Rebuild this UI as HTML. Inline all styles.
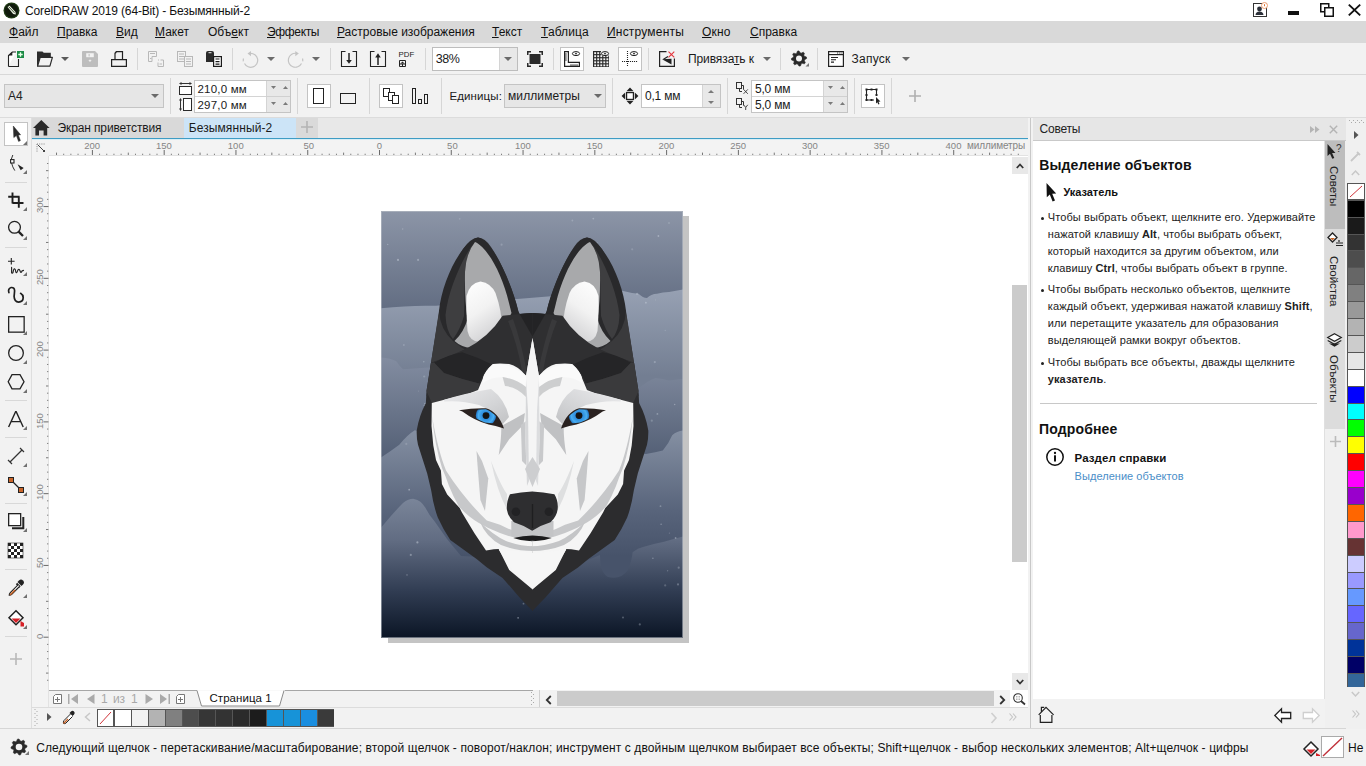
<!DOCTYPE html>
<html><head><meta charset="utf-8"><title>CorelDRAW</title><style>
*{box-sizing:border-box;margin:0;padding:0}
html,body{width:1366px;height:766px;overflow:hidden;background:#f2f2f2;font-family:"Liberation Sans",sans-serif;color:#1a1a1a}
.a{position:absolute}
.t{position:absolute;white-space:pre;line-height:1;font-family:"Liberation Sans",sans-serif}
svg{overflow:visible}
</style></head><body>
<div class="a" style="left:0px;top:0px;width:1366px;height:21px;background:#ffffff;"></div>
<svg class="a" style="left:3px;top:2px;" width="17" height="17" viewBox="0 0 17 17"><circle cx="8.5" cy="8.5" r="8" fill="#1f3a14"/><circle cx="8.5" cy="8.5" r="6.8" fill="#101a0c"/><path d="M4.5 5 L6.5 3.5 L12.5 10 L12.8 12.6 L10.2 12 Z" fill="#e8eee0"/><path d="M5.6 4.6 L11.5 10.8" stroke="#1f3a14" stroke-width="0.8"/></svg>
<div class="t" style="left:25px;top:4.84px;font-size:12px;color:#111;font-weight:normal;letter-spacing:-0.15px;">CorelDRAW 2019 (64-Bit) - Безымянный-2</div>
<svg class="a" style="left:1253px;top:3px;" width="15" height="15" viewBox="0 0 15 15"><rect x="0.5" y="0.5" width="13" height="13" fill="#fff" stroke="#333" stroke-width="1"/><circle cx="6.5" cy="6" r="2.4" fill="#2b2f38"/><path d="M2.5 12 Q2.8 8.8 6.5 8.6 Q10.2 8.8 10.5 12 Z" fill="#2b2f38"/><circle cx="11.5" cy="2.5" r="3" fill="#fff" stroke="#f0a070" stroke-width="1"/><rect x="11" y="1.2" width="1" height="2" fill="#e07030"/></svg>
<div class="a" style="left:1288px;top:11px;width:11px;height:4px;background:#111;"></div>
<svg class="a" style="left:1320px;top:3px;" width="14" height="14" viewBox="0 0 14 14"><rect x="0.75" y="0.75" width="8" height="8" fill="none" stroke="#111" stroke-width="1.5"/><rect x="4.75" y="4.75" width="8.5" height="8.5" fill="#fff" stroke="#111" stroke-width="1.5"/></svg>
<svg class="a" style="left:1348px;top:4px;" width="13" height="12" viewBox="0 0 13 12"><path d="M0.8 0.6 L12.2 11.4 M12.2 0.6 L0.8 11.4" stroke="#111" stroke-width="1.9"/></svg>
<div class="a" style="left:0px;top:21px;width:1366px;height:22px;background:#d9d9d9;"></div>
<div class="t" style="left:9px;top:25.84px;font-size:12px;color:#111;font-weight:normal;letter-spacing:0px;text-underline-offset:1px"><u>Ф</u>айл</div>
<div class="t" style="left:57px;top:25.84px;font-size:12px;color:#111;font-weight:normal;letter-spacing:0px;text-underline-offset:1px"><u>П</u>равка</div>
<div class="t" style="left:116px;top:25.84px;font-size:12px;color:#111;font-weight:normal;letter-spacing:0px;text-underline-offset:1px"><u>В</u>ид</div>
<div class="t" style="left:155px;top:25.84px;font-size:12px;color:#111;font-weight:normal;letter-spacing:0px;text-underline-offset:1px"><u>М</u>акет</div>
<div class="t" style="left:208px;top:25.84px;font-size:12px;color:#111;font-weight:normal;letter-spacing:0px;text-underline-offset:1px">Объ<u>е</u>кт</div>
<div class="t" style="left:267px;top:25.84px;font-size:12px;color:#111;font-weight:normal;letter-spacing:-0.35px;text-underline-offset:1px"><u>Э</u>ффекты</div>
<div class="t" style="left:337px;top:25.84px;font-size:12px;color:#111;font-weight:normal;letter-spacing:0px;text-underline-offset:1px"><u>Р</u>астровые изображения</div>
<div class="t" style="left:492px;top:25.84px;font-size:12px;color:#111;font-weight:normal;letter-spacing:0px;text-underline-offset:1px"><u>Т</u>екст</div>
<div class="t" style="left:541px;top:25.84px;font-size:12px;color:#111;font-weight:normal;letter-spacing:0.1px;text-underline-offset:1px"><u>Т</u>аблица</div>
<div class="t" style="left:607px;top:25.84px;font-size:12px;color:#111;font-weight:normal;letter-spacing:0.2px;text-underline-offset:1px"><u>И</u>нструменты</div>
<div class="t" style="left:702px;top:25.84px;font-size:12px;color:#111;font-weight:normal;letter-spacing:0.15px;text-underline-offset:1px"><u>О</u>кно</div>
<div class="t" style="left:750px;top:25.84px;font-size:12px;color:#111;font-weight:normal;letter-spacing:0px;text-underline-offset:1px"><u>С</u>правка</div>
<div class="a" style="left:0px;top:43px;width:1366px;height:31px;background:#f2f2f2;"></div>
<div class="a" style="left:0px;top:74px;width:1366px;height:1px;background:#d8d8d8;"></div>
<svg class="a" style="left:8px;top:51px;" width="17" height="16" viewBox="0 0 17 16"><path d="M0.5 15.5 V4.5 L4.3 1 H8" fill="#fff" stroke="#222" stroke-width="1.1"/><path d="M0.5 15.5 H10.5 V8" fill="none" stroke="#222" stroke-width="1.1"/><path d="M0.5 4.5 L4.3 1 V4.5 Z" fill="#222"/><rect x="9" y="0" width="7" height="7" fill="#1b8a45"/><path d="M12.5 1.3 V5.7 M10.3 3.5 H14.7" stroke="#e8ffe8" stroke-width="1.3"/></svg>
<svg class="a" style="left:37px;top:51px;" width="16" height="16" viewBox="0 0 16 16"><path d="M0.6 15.2 V1 H5.2 L6.6 2.4 H13.2 V6.5" fill="#2c2c2c" stroke="#2c2c2c" stroke-width="1.2"/><path d="M0.6 15.2 L3.2 6.3 H15.4 L12.9 15.2 Z" fill="#f2f2f2" stroke="#2c2c2c" stroke-width="1.2" stroke-linejoin="round"/></svg>
<svg class="a" style="left:61px;top:57px;" width="8" height="4" viewBox="0 0 8 4"><path d="M0 0 L8 0 L4 4 Z" fill="#5a5a5a"/></svg>
<svg class="a" style="left:82px;top:51px;" width="16" height="16" viewBox="0 0 16 16"><path d="M0 1 Q0 0 1 0 H13 L16 3 V15 Q16 16 15 16 H1 Q0 16 0 15 Z" fill="#bdbdbd"/><rect x="4.2" y="2.2" width="7.6" height="4" fill="#f2f2f2"/><rect x="6.6" y="3" width="1" height="2.4" fill="#bdbdbd"/><path d="M7 9.3 H9 L8 10.5 Z" fill="#f2f2f2" stroke="#f2f2f2" stroke-width="1"/></svg>
<svg class="a" style="left:111px;top:51px;" width="16" height="16" viewBox="0 0 16 16"><path d="M4 8.5 V2.3 L5.3 0.6 H11.5 V8.5" fill="#f2f2f2" stroke="#222" stroke-width="1.2"/><path d="M4 2.3 H5.3 V0.6" fill="#222"/><path d="M0.6 8.6 H15.4 V15.3 H0.6 Z" fill="#f2f2f2" stroke="#222" stroke-width="1.2"/></svg>
<div class="a" style="left:137px;top:48px;width:1px;height:22px;background:#d6d6d6;"></div>
<svg class="a" style="left:148px;top:51px;" width="17" height="16" viewBox="0 0 17 16"><g fill="none" stroke="#b8b8b8" stroke-width="1"><path d="M0.5 0.5 H8.5 V5.5 H4 V10.5 H0.5 Z"/><path d="M2 2.5 H7"/><path d="M2 7.5 H3.5"/><path d="M10 9 H11 M12.5 9 H15.5 V15.5 H10 V11.5" stroke-dasharray="none"/><path d="M11.5 13 H14"/></g></svg>
<svg class="a" style="left:177px;top:51px;" width="16" height="16" viewBox="0 0 16 16"><g fill="#f2f2f2" stroke="#b8b8b8" stroke-width="1"><rect x="0.5" y="0.5" width="8" height="10"/><path d="M2 3 H7 M2 5.5 H7 M2 8 H7"/><rect x="7.5" y="5.5" width="8" height="10"/><path d="M9 8 H14 M9 10.5 H14 M9 13 H14"/></g></svg>
<svg class="a" style="left:206px;top:51px;" width="16" height="16" viewBox="0 0 16 16"><path d="M0 2 Q0 0 2 0 H6 Q8 0 8 2 V11 H0 Z" fill="#2a2a2a"/><rect x="2.5" y="1.2" width="3" height="1" fill="#f2f2f2"/><rect x="7.6" y="5.6" width="7.8" height="9.8" fill="#fff" stroke="#1a1a1a" stroke-width="1.2"/><path d="M9.5 8 H13.5 M9.5 10.6 H13.5 M9.5 13.2 H13.5" stroke="#1a1a1a" stroke-width="1.2"/></svg>
<div class="a" style="left:232px;top:48px;width:1px;height:22px;background:#d6d6d6;"></div>
<svg class="a" style="left:242px;top:51px;" width="17" height="17" viewBox="0 0 17 17"><path d="M8.2 2.3 A7 7 0 1 1 2.5 12.5" fill="none" stroke="#c4c4c4" stroke-width="1.2"/><path d="M1.3 10.3 A7 7 0 0 1 1.5 7.5" fill="none" stroke="#c4c4c4" stroke-width="1.2"/><path d="M5.5 2.6 L9 0 V5.2 Z" fill="#c4c4c4"/></svg>
<svg class="a" style="left:267px;top:57px;" width="8" height="4" viewBox="0 0 8 4"><path d="M0 0 L8 0 L4 4 Z" fill="#6b6b6b"/></svg>
<svg class="a" style="left:288px;top:51px;" width="17" height="17" viewBox="0 0 17 17"><path d="M8.2 2.3 A7 7 0 1 0 13.5 12.5" fill="none" stroke="#c4c4c4" stroke-width="1.2"/><path d="M14.7 10.3 A7 7 0 0 0 14.5 7.5" fill="none" stroke="#c4c4c4" stroke-width="1.2"/><path d="M10.8 2.6 L7.3 0 V5.2 Z" fill="#c4c4c4"/></svg>
<svg class="a" style="left:312px;top:57px;" width="8" height="4" viewBox="0 0 8 4"><path d="M0 0 L8 0 L4 4 Z" fill="#6b6b6b"/></svg>
<div class="a" style="left:330px;top:48px;width:1px;height:22px;background:#d6d6d6;"></div>
<svg class="a" style="left:341px;top:51px;" width="16" height="16" viewBox="0 0 16 16"><path d="M4.5 0.5 H0.5 V15.5 H15.5 V0.5 H11.5" fill="none" stroke="#222" stroke-width="1.1"/><path d="M8 2 V10" stroke="#222" stroke-width="1.5"/><path d="M5.2 9 L8 12.8 L10.8 9 Z" fill="#222"/></svg>
<svg class="a" style="left:370px;top:51px;" width="16" height="16" viewBox="0 0 16 16"><path d="M4.5 0.5 H0.5 V15.5 H15.5 V0.5 H11.5" fill="none" stroke="#222" stroke-width="1.1"/><path d="M8 6 V14" stroke="#222" stroke-width="1.5"/><path d="M5.2 6.5 L8 2.2 L10.8 6.5 Z" fill="#222"/></svg>
<div class="t" style="left:398.6px;top:51.40px;font-size:7.8px;color:#222;font-weight:normal;letter-spacing:0px;">PDF</div>
<svg class="a" style="left:399px;top:60px;" width="7" height="7" viewBox="0 0 7 7"><path d="M0.5 6.5 V0.5 H6.5 V6.5 Z M0.5 4 H6.5" fill="none" stroke="#222" stroke-width="1"/><path d="M3.5 1.5 L1.5 3.5 H5.5 Z" fill="#222"/><path d="M3.5 4 V6.5" stroke="#222" stroke-width="1"/></svg>
<div class="a" style="left:425px;top:48px;width:1px;height:22px;background:#d6d6d6;"></div>
<div class="a" style="left:432px;top:47px;width:86px;height:24px;background:#fff;border:1px solid #bdbdbd"></div>
<div class="a" style="left:499px;top:48px;width:18px;height:22px;background:#e8e8e8;border-left:1px solid #d4d4d4"></div>
<svg class="a" style="left:504px;top:57px;" width="8" height="4" viewBox="0 0 8 4"><path d="M0 0 L8 0 L4 4 Z" fill="#6a6a6a"/></svg>
<div class="t" style="left:435.8px;top:53.42px;font-size:12.5px;color:#1a1a1a;font-weight:normal;letter-spacing:-0.5px;">38%</div>
<svg class="a" style="left:527px;top:51px;" width="16" height="16" viewBox="0 0 16 16"><path d="M0.75 4 V0.75 H4 M12 0.75 H15.25 V4 M15.25 12 V15.25 H12 M4 15.25 H0.75 V12" fill="none" stroke="#2a2a2a" stroke-width="1.5"/><rect x="2.5" y="3" width="11" height="10" fill="#2a2a2a"/></svg>
<div class="a" style="left:553px;top:48px;width:1px;height:22px;background:#d6d6d6;"></div>
<div class="a" style="left:560px;top:47px;width:24px;height:24px;background:#fff;border:1px solid #c3c3c3"></div>
<svg class="a" style="left:564px;top:51px;" width="16" height="16" viewBox="0 0 16 16"><path d="M0.6 0.6 H4.4 V11.4 H15.4 V15.4 H0.6 Z" fill="#fff" stroke="#222" stroke-width="1.2"/><path d="M1 3 H2.8 M1 5 H2.8 M1 7 H2.8 M1 9 H2.8 M7 15 V13.2 M9 15 V13.2 M11 15 V13.2 M13 15 V13.2" stroke="#222" stroke-width="0.9"/><ellipse cx="12" cy="2.6" rx="3.6" ry="2" fill="#fff" stroke="#222" stroke-width="1"/><circle cx="12" cy="2.6" r="0.9" fill="#222"/></svg>
<svg class="a" style="left:593px;top:51px;" width="16" height="16" viewBox="0 0 16 16"><path d="M0 0 H8 V4.5 H16 V16 H0 Z" fill="#2a2a2a"/><rect x="1.20" y="1.20" width="1.9" height="1.9" fill="#f2f2f2"/><rect x="1.20" y="4.25" width="1.9" height="1.9" fill="#f2f2f2"/><rect x="1.20" y="7.30" width="1.9" height="1.9" fill="#f2f2f2"/><rect x="1.20" y="10.35" width="1.9" height="1.9" fill="#f2f2f2"/><rect x="1.20" y="13.40" width="1.9" height="1.9" fill="#f2f2f2"/><rect x="4.25" y="1.20" width="1.9" height="1.9" fill="#f2f2f2"/><rect x="4.25" y="4.25" width="1.9" height="1.9" fill="#f2f2f2"/><rect x="4.25" y="7.30" width="1.9" height="1.9" fill="#f2f2f2"/><rect x="4.25" y="10.35" width="1.9" height="1.9" fill="#f2f2f2"/><rect x="4.25" y="13.40" width="1.9" height="1.9" fill="#f2f2f2"/><rect x="7.30" y="1.20" width="1.9" height="1.9" fill="#f2f2f2"/><rect x="7.30" y="4.25" width="1.9" height="1.9" fill="#f2f2f2"/><rect x="7.30" y="7.30" width="1.9" height="1.9" fill="#f2f2f2"/><rect x="7.30" y="10.35" width="1.9" height="1.9" fill="#f2f2f2"/><rect x="7.30" y="13.40" width="1.9" height="1.9" fill="#f2f2f2"/><rect x="10.35" y="4.25" width="1.9" height="1.9" fill="#f2f2f2"/><rect x="10.35" y="7.30" width="1.9" height="1.9" fill="#f2f2f2"/><rect x="10.35" y="10.35" width="1.9" height="1.9" fill="#f2f2f2"/><rect x="10.35" y="13.40" width="1.9" height="1.9" fill="#f2f2f2"/><rect x="13.40" y="4.25" width="1.9" height="1.9" fill="#f2f2f2"/><rect x="13.40" y="7.30" width="1.9" height="1.9" fill="#f2f2f2"/><rect x="13.40" y="10.35" width="1.9" height="1.9" fill="#f2f2f2"/><rect x="13.40" y="13.40" width="1.9" height="1.9" fill="#f2f2f2"/><ellipse cx="12" cy="2.6" rx="3.6" ry="2" fill="#f2f2f2" stroke="#222" stroke-width="1"/><circle cx="12" cy="2.6" r="0.9" fill="#222"/></svg>
<div class="a" style="left:618px;top:47px;width:24px;height:24px;background:#fff;border:1px solid #c3c3c3"></div>
<svg class="a" style="left:622px;top:51px;" width="16" height="16" viewBox="0 0 16 16"><path d="M5.5 0 V16" stroke="#222" stroke-width="1.1" stroke-dasharray="1.1 0.9"/><path d="M0 10.5 H16" stroke="#222" stroke-width="1.1" stroke-dasharray="1.1 0.9"/><ellipse cx="12" cy="2.6" rx="3.6" ry="2" fill="#fff" stroke="#222" stroke-width="1"/><circle cx="12" cy="2.6" r="0.9" fill="#222"/></svg>
<div class="a" style="left:648px;top:48px;width:1px;height:22px;background:#d6d6d6;"></div>
<svg class="a" style="left:659px;top:51px;" width="16" height="16" viewBox="0 0 16 16"><path d="M7.5 0.6 H0.6 V15.4 H15.4 V7.5" fill="none" stroke="#222" stroke-width="1.2"/><path d="M12.5 7.8 L12.5 13.5 L3 8.2 Z" fill="#222"/><path d="M4.5 8.2 L9 5.5" stroke="#222" stroke-width="1.2"/><path d="M9.5 0.6 L15.3 6.3 M15.3 0.6 L9.5 6.3" stroke="#e3343c" stroke-width="1.1"/></svg>
<div class="t" style="left:688px;top:52.84px;font-size:12px;color:#1a1a1a;font-weight:normal;letter-spacing:-0.1px;text-underline-offset:1px">Привяза<u>т</u>ь к</div>
<svg class="a" style="left:763px;top:57px;" width="8" height="4" viewBox="0 0 8 4"><path d="M0 0 L8 0 L4 4 Z" fill="#6a6a6a"/></svg>
<div class="a" style="left:780px;top:48px;width:1px;height:22px;background:#d6d6d6;"></div>
<svg class="a" style="left:791px;top:51px;" width="19" height="17" viewBox="0 0 19 17"><path d="M15.45 6.02 L15.60 7.50 L13.69 8.63 L13.36 9.72 L14.32 11.72 L13.37 12.87 L11.22 12.32 L10.22 12.86 L9.48 14.95 L8.00 15.10 L6.87 13.19 L5.78 12.86 L3.78 13.82 L2.63 12.87 L3.18 10.72 L2.64 9.72 L0.55 8.98 L0.40 7.50 L2.31 6.37 L2.64 5.28 L1.68 3.28 L2.63 2.13 L4.78 2.68 L5.78 2.14 L6.52 0.05 L8.00 -0.10 L9.13 1.81 L10.22 2.14 L12.22 1.18 L13.37 2.13 L12.82 4.28 L13.36 5.28 Z" fill="#2a2a2a" stroke="#2a2a2a" stroke-width="0.6" stroke-linejoin="round"/><circle cx="8" cy="7.5" r="3.0" fill="#f2f2f2"/><path d="M14.5 15.5 H18 V12 Z" fill="#777"/></svg>
<div class="a" style="left:817px;top:48px;width:1px;height:22px;background:#d6d6d6;"></div>
<svg class="a" style="left:828px;top:51px;" width="16" height="16" viewBox="0 0 16 16"><rect x="0.6" y="0.6" width="14.8" height="14.8" fill="#fff" stroke="#222" stroke-width="1.2"/><path d="M0.6 3.6 H15.4" stroke="#222" stroke-width="1.2"/><path d="M3 6.5 H10 M3 8.8 H8 M3 11.1 H6" stroke="#222" stroke-width="1.1"/><path d="M9 2 H14.5" stroke="#222" stroke-width="0.9" stroke-dasharray="1 0.8"/></svg>
<div class="t" style="left:851.5px;top:53.04px;font-size:12px;color:#1a1a1a;font-weight:normal;letter-spacing:0.25px;">Запуск</div>
<svg class="a" style="left:902px;top:57px;" width="8" height="4" viewBox="0 0 8 4"><path d="M0 0 L8 0 L4 4 Z" fill="#6a6a6a"/></svg>
<div class="a" style="left:0px;top:75px;width:1366px;height:42px;background:#f2f2f2;"></div>
<div class="a" style="left:0px;top:117px;width:1366px;height:1px;background:#dcdcdc;"></div>
<div class="a" style="left:4px;top:84px;width:160px;height:24px;background:#e6e6e6;border:1px solid #c4c4c4"></div>
<div class="t" style="left:8px;top:90.34px;font-size:12px;color:#222;font-weight:normal;letter-spacing:0px;">A4</div>
<svg class="a" style="left:151px;top:94px;" width="8" height="4" viewBox="0 0 8 4"><path d="M0 0 L8 0 L4 4 Z" fill="#6a6a6a"/></svg>
<div class="a" style="left:170px;top:78px;width:1px;height:36px;background:#d6d6d6;"></div>
<svg class="a" style="left:0px;top:0px;" width="200" height="120" viewBox="0 0 200 120"><path d="M180 83.5 H191" stroke="#333" stroke-width="1"/><path d="M179 83.5 L181.5 82 V85 Z M192 83.5 L189.5 82 V85 Z" fill="#333"/><rect x="179.5" y="86.5" width="12" height="8" fill="#fff" stroke="#2a2a2a" stroke-width="1"/><path d="M180.5 99 V110" stroke="#333" stroke-width="1"/><path d="M180.5 98 L179 100.5 H182 Z M180.5 111 L179 108.5 H182 Z" fill="#333"/><rect x="183.5" y="98.5" width="8" height="12" fill="#fff" stroke="#2a2a2a" stroke-width="1"/></svg>
<div class="a" style="left:194px;top:80px;width:97px;height:33px;background:#fff;border:1px solid #c4c4c4"></div>
<div class="a" style="left:195px;top:96px;width:95px;height:1px;background:#d4d4d4;"></div>
<div class="a" style="left:266px;top:81px;width:24px;height:31px;background:#e8e8e8;border-left:1px solid #d4d4d4"></div>
<div class="a" style="left:266px;top:96px;width:24px;height:1px;background:#d0d0d0;"></div>
<svg class="a" style="left:271px;top:86px;" width="5" height="3" viewBox="0 0 5 3"><path d="M0 0 H5 L2.5 3 Z" fill="#7a7a7a"/></svg>
<svg class="a" style="left:283px;top:86px;" width="5" height="3" viewBox="0 0 5 3"><path d="M0 3 H5 L2.5 0 Z" fill="#7a7a7a"/></svg>
<svg class="a" style="left:271px;top:102px;" width="5" height="3" viewBox="0 0 5 3"><path d="M0 0 H5 L2.5 3 Z" fill="#7a7a7a"/></svg>
<svg class="a" style="left:283px;top:102px;" width="5" height="3" viewBox="0 0 5 3"><path d="M0 3 H5 L2.5 0 Z" fill="#7a7a7a"/></svg>
<div class="t" style="left:197.5px;top:84.07px;font-size:11.5px;color:#1a1a1a;font-weight:normal;letter-spacing:0.2px;">210,0 мм</div>
<div class="t" style="left:197.5px;top:100.07px;font-size:11.5px;color:#1a1a1a;font-weight:normal;letter-spacing:0.2px;">297,0 мм</div>
<div class="a" style="left:297px;top:78px;width:1px;height:36px;background:#d6d6d6;"></div>
<div class="a" style="left:307px;top:84px;width:24px;height:24px;background:#fff;border:1px solid #c3c3c3"></div>
<div class="a" style="left:369px;top:78px;width:1px;height:36px;background:#d6d6d6;"></div>
<div class="a" style="left:379px;top:84px;width:24px;height:24px;background:#fff;border:1px solid #c3c3c3"></div>
<div class="a" style="left:441px;top:78px;width:1px;height:36px;background:#d6d6d6;"></div>
<svg class="a" style="left:0px;top:0px;" width="440" height="120" viewBox="0 0 440 120"><g fill="#fff" stroke="#222" stroke-width="1"><rect x="313.5" y="88.5" width="10" height="15"/><rect x="340.5" y="93.5" width="15" height="10" fill="#f2f2f2"/><rect x="383.5" y="88.5" width="6" height="8"/><rect x="388.5" y="92.5" width="6" height="8"/><rect x="392.5" y="95.5" width="6" height="8"/><rect x="412.5" y="88.5" width="3" height="15" fill="#f2f2f2"/><rect x="418.5" y="99.5" width="3" height="4" fill="#f2f2f2"/><rect x="424.5" y="94.5" width="3" height="9" fill="#f2f2f2"/></g></svg>
<div class="t" style="left:449.5px;top:90.57px;font-size:11.5px;color:#1a1a1a;font-weight:normal;letter-spacing:0.1px;">Единицы:</div>
<div class="a" style="left:504px;top:84px;width:102px;height:24px;background:#e6e6e6;border:1px solid #c4c4c4"></div>
<div class="t" style="left:508px;top:90.14px;font-size:12px;color:#1a1a1a;font-weight:normal;letter-spacing:0.1px;">миллиметры</div>
<svg class="a" style="left:594px;top:94px;" width="8" height="4" viewBox="0 0 8 4"><path d="M0 0 L8 0 L4 4 Z" fill="#6a6a6a"/></svg>
<div class="a" style="left:612px;top:78px;width:1px;height:36px;background:#d6d6d6;"></div>
<svg class="a" style="left:0px;top:0px;" width="760" height="120" viewBox="0 0 760 120"><rect x="626.6" y="92.6" width="6.8" height="6.8" fill="#fff" stroke="#222" stroke-width="1.2"/><path d="M630 87.6 L633.6 91.2 H626.4 Z M630 104.4 L633.6 100.8 H626.4 Z M621.6 96 L625.2 92.4 V99.6 Z M638.4 96 L634.8 92.4 V99.6 Z" fill="#222"/></svg>
<div class="a" style="left:641px;top:84px;width:80px;height:24px;background:#fff;border:1px solid #c4c4c4"></div>
<div class="a" style="left:702px;top:85px;width:18px;height:22px;background:#e8e8e8;border-left:1px solid #d4d4d4"></div>
<svg class="a" style="left:708px;top:90px;" width="6" height="3" viewBox="0 0 6 3"><path d="M0 3 H6 L3 0 Z" fill="#7a7a7a"/></svg>
<svg class="a" style="left:708px;top:101px;" width="6" height="3" viewBox="0 0 6 3"><path d="M0 0 H6 L3 3 Z" fill="#7a7a7a"/></svg>
<div class="t" style="left:645px;top:89.84px;font-size:12px;color:#1a1a1a;font-weight:normal;letter-spacing:-0.2px;">0,1 мм</div>
<div class="a" style="left:727px;top:78px;width:1px;height:36px;background:#d6d6d6;"></div>
<svg class="a" style="left:0px;top:0px;" width="760" height="120" viewBox="0 0 760 120"><rect x="736.5" y="82.5" width="5" height="6" fill="none" stroke="#333" stroke-width="1"/><path d="M741.5 85.5 H743.5 V89.5 M739.5 88.5 V91.5 H742" fill="none" stroke="#333" stroke-width="1"/><path d="M743.6 89.4 L747.8 93.8 M747.8 89.4 L743.6 93.8" stroke="#333" stroke-width="0.9"/><rect x="736.5" y="98.5" width="5" height="6" fill="none" stroke="#333" stroke-width="1"/><path d="M741.5 101.5 H743.5 V105.5 M739.5 104.5 V107.5 H742" fill="none" stroke="#333" stroke-width="1"/><path d="M743.6 104.8 L745.7 107.4 L747.8 104.8 M745.7 107.4 V110" fill="none" stroke="#333" stroke-width="0.9"/></svg>
<div class="a" style="left:751px;top:80px;width:97px;height:33px;background:#fff;border:1px solid #c4c4c4"></div>
<div class="a" style="left:752px;top:96px;width:95px;height:1px;background:#d4d4d4;"></div>
<div class="a" style="left:823px;top:81px;width:24px;height:31px;background:#e8e8e8;border-left:1px solid #d4d4d4"></div>
<div class="a" style="left:823px;top:96px;width:24px;height:1px;background:#d0d0d0;"></div>
<svg class="a" style="left:828px;top:86px;" width="5" height="3" viewBox="0 0 5 3"><path d="M0 0 H5 L2.5 3 Z" fill="#7a7a7a"/></svg>
<svg class="a" style="left:840px;top:86px;" width="5" height="3" viewBox="0 0 5 3"><path d="M0 3 H5 L2.5 0 Z" fill="#7a7a7a"/></svg>
<svg class="a" style="left:828px;top:102px;" width="5" height="3" viewBox="0 0 5 3"><path d="M0 0 H5 L2.5 3 Z" fill="#7a7a7a"/></svg>
<svg class="a" style="left:840px;top:102px;" width="5" height="3" viewBox="0 0 5 3"><path d="M0 3 H5 L2.5 0 Z" fill="#7a7a7a"/></svg>
<div class="t" style="left:755px;top:82.84px;font-size:12px;color:#1a1a1a;font-weight:normal;letter-spacing:-0.2px;">5,0 мм</div>
<div class="t" style="left:755px;top:98.84px;font-size:12px;color:#1a1a1a;font-weight:normal;letter-spacing:-0.2px;">5,0 мм</div>
<div class="a" style="left:854px;top:78px;width:1px;height:36px;background:#d6d6d6;"></div>
<div class="a" style="left:861px;top:84px;width:24px;height:24px;background:#fff;border:1px solid #c3c3c3"></div>
<svg class="a" style="left:865px;top:88px;" width="16" height="16" viewBox="0 0 16 16"><path d="M1.5 1.5 H11.5 V7 M1.5 1.5 V12 H9" fill="none" stroke="#222" stroke-width="1.1"/><g fill="#222"><rect x="0.5" y="0.5" width="2" height="2"/><rect x="5.5" y="0.5" width="2" height="2"/><rect x="10.5" y="0.5" width="2" height="2"/><rect x="0.5" y="6" width="2" height="2"/><rect x="10.5" y="6" width="2" height="2"/><rect x="0.5" y="11" width="2" height="2"/><rect x="5.5" y="11" width="2" height="2"/></g><path d="M11 9 L15.5 13.5 L13.5 13.7 L14.5 16 L13.3 16.4 L12.4 14.2 L11 15.5 Z" fill="#222"/></svg>
<div class="a" style="left:891px;top:78px;width:1px;height:36px;background:#d6d6d6;"></div>
<svg class="a" style="left:909px;top:90px;" width="12" height="12" viewBox="0 0 12 12"><path d="M6 0 V12 M0 6 H12" stroke="#b0b0b0" stroke-width="1.6"/></svg>
<div class="a" style="left:0px;top:118px;width:31px;height:611px;background:#f2f2f2;"></div>
<div class="a" style="left:31px;top:118px;width:1px;height:611px;background:#dedede;"></div>
<div class="a" style="left:4px;top:122px;width:24px;height:24px;background:#fff;border:1px solid #c3c3c3"></div>
<svg class="a" style="left:12.5px;top:126px;" width="9" height="16" viewBox="0 0 9 16"><path d="M0.3 0 L0.8 11.6 L3.4 9.6 L5.6 15.4 L7.4 14.6 L5.3 8.9 L7.6 8.8 Z" fill="#2a2a2a" stroke="#2a2a2a" stroke-width="0.5" stroke-linejoin="round"/></svg>
<svg class="a" style="left:23px;top:141px" width="4" height="4" viewBox="0 0 4 4"><path d="M4 0 V4 H0 Z" fill="#707070"/></svg>
<svg class="a" style="left:9px;top:155px;" width="18" height="19" viewBox="0 0 18 19"><path d="M3.8 0 Q1.6 4 2.6 8 Q3.4 12 5.8 15.6" fill="none" stroke="#333" stroke-width="1"/><rect x="1.6" y="4.6" width="3.4" height="3.4" fill="#fff" stroke="#222" stroke-width="1.1"/><path d="M8.6 9.2 L14.6 13 L11.7 15.2 Z" fill="#222"/></svg>
<svg class="a" style="left:23px;top:170px" width="4" height="4" viewBox="0 0 4 4"><path d="M4 0 V4 H0 Z" fill="#707070"/></svg>
<div class="a" style="left:5px;top:182px;width:22px;height:1px;background:#d8d8d8;"></div>
<svg class="a" style="left:0px;top:0px;" width="32" height="240" viewBox="0 0 32 240"><path d="M8.2 196.7 H19.6 M12.5 192.4 V203.4 M18.8 196.7 V207.7 M12.5 203 H23.5" stroke="#1e1e1e" stroke-width="1.9" fill="none"/></svg>
<svg class="a" style="left:23px;top:207px" width="4" height="4" viewBox="0 0 4 4"><path d="M4 0 V4 H0 Z" fill="#707070"/></svg>
<svg class="a" style="left:0px;top:0px;" width="32" height="240" viewBox="0 0 32 240"><circle cx="14.5" cy="227.3" r="5.9" fill="none" stroke="#222" stroke-width="1.3"/><path d="M18.6 231.6 L23 236" stroke="#222" stroke-width="2.3"/></svg>
<svg class="a" style="left:23px;top:236px" width="4" height="4" viewBox="0 0 4 4"><path d="M4 0 V4 H0 Z" fill="#707070"/></svg>
<div class="a" style="left:5px;top:247px;width:22px;height:1px;background:#d8d8d8;"></div>
<svg class="a" style="left:0px;top:0px;" width="32" height="310" viewBox="0 0 32 310"><path d="M11.3 258 V264.6 M8 261.3 H14.6" stroke="#222" stroke-width="1.1" fill="none"/><path d="M11.6 267.4 V272.6 Q12.4 273.8 13 272.6 Q13.6 268.5 14.6 268.8 Q15.6 269.2 15.8 272 Q16.6 273.6 17.4 271.4 Q18.2 268.8 19.2 269.4 Q20 270.2 20.4 272 Q21.2 273.2 22 271 L23.5 270.4" stroke="#222" stroke-width="1.15" fill="none" stroke-linecap="round"/></svg>
<svg class="a" style="left:23px;top:272px" width="4" height="4" viewBox="0 0 4 4"><path d="M4 0 V4 H0 Z" fill="#707070"/></svg>
<svg class="a" style="left:0px;top:0px;" width="32" height="310" viewBox="0 0 32 310"><path d="M8.9 292.6 Q7.6 288.6 11.2 287.5 Q14.4 287.2 14.6 290.8 Q14.4 293.6 14.1 296.4 Q14.4 302 18.6 302.1 Q23.2 301.9 23.2 297.6 Q23 294.6 20.6 293.3" stroke="#1e1e1e" stroke-width="1.7" fill="none" stroke-linecap="round"/></svg>
<svg class="a" style="left:23px;top:301px" width="4" height="4" viewBox="0 0 4 4"><path d="M4 0 V4 H0 Z" fill="#707070"/></svg>
<svg class="a" style="left:8px;top:316px;" width="17" height="17" viewBox="0 0 17 17"><rect x="0.65" y="0.65" width="15.5" height="15.5" fill="none" stroke="#222" stroke-width="1.3"/></svg>
<svg class="a" style="left:23px;top:331px" width="4" height="4" viewBox="0 0 4 4"><path d="M4 0 V4 H0 Z" fill="#707070"/></svg>
<svg class="a" style="left:8px;top:345px;" width="17" height="17" viewBox="0 0 17 17"><circle cx="8" cy="8" r="7.35" fill="none" stroke="#222" stroke-width="1.3"/></svg>
<svg class="a" style="left:23px;top:360px" width="4" height="4" viewBox="0 0 4 4"><path d="M4 0 V4 H0 Z" fill="#707070"/></svg>
<svg class="a" style="left:8px;top:374px;" width="17" height="16" viewBox="0 0 17 16"><path d="M4 0.65 H12 L16 7.75 L12 14.85 H4 L0.2 7.75 Z" fill="none" stroke="#222" stroke-width="1.3"/></svg>
<svg class="a" style="left:23px;top:389px" width="4" height="4" viewBox="0 0 4 4"><path d="M4 0 V4 H0 Z" fill="#707070"/></svg>
<div class="a" style="left:5px;top:400px;width:22px;height:1px;background:#d8d8d8;"></div>
<svg class="a" style="left:0px;top:0px;" width="32" height="440" viewBox="0 0 32 440"><path d="M8.6 427 L15.6 411.6 H16.2 L23.2 427 M11 421.6 H20.8" stroke="#222" stroke-width="1.4" fill="none" stroke-linejoin="miter"/></svg>
<svg class="a" style="left:23px;top:426px" width="4" height="4" viewBox="0 0 4 4"><path d="M4 0 V4 H0 Z" fill="#707070"/></svg>
<div class="a" style="left:5px;top:437px;width:22px;height:1px;background:#d8d8d8;"></div>
<svg class="a" style="left:8px;top:448px;" width="17" height="17" viewBox="0 0 17 17"><path d="M2 14 L14 2" stroke="#333" stroke-width="1.2"/><path d="M0 12 L4 16 M12 0 L16 4" stroke="#333" stroke-width="1.2"/></svg>
<svg class="a" style="left:23px;top:463px" width="4" height="4" viewBox="0 0 4 4"><path d="M4 0 V4 H0 Z" fill="#707070"/></svg>
<svg class="a" style="left:8px;top:477px;" width="17" height="17" viewBox="0 0 17 17"><path d="M3 3 L13 13" stroke="#222" stroke-width="1.3"/><rect x="0.5" y="0.5" width="5" height="5" fill="#c8652a" stroke="#222" stroke-width="1"/><rect x="10.5" y="10.5" width="5" height="5" fill="#c8652a" stroke="#222" stroke-width="1"/></svg>
<svg class="a" style="left:23px;top:492px" width="4" height="4" viewBox="0 0 4 4"><path d="M4 0 V4 H0 Z" fill="#707070"/></svg>
<div class="a" style="left:5px;top:503px;width:22px;height:1px;background:#d8d8d8;"></div>
<svg class="a" style="left:8px;top:513px;" width="17" height="17" viewBox="0 0 17 17"><path d="M4 15.3 H15.3 V4" fill="none" stroke="#222" stroke-width="2"/><rect x="0.65" y="0.65" width="12" height="12" fill="#fff" stroke="#222" stroke-width="1.3"/></svg>
<svg class="a" style="left:23px;top:528px" width="4" height="4" viewBox="0 0 4 4"><path d="M4 0 V4 H0 Z" fill="#707070"/></svg>
<svg class="a" style="left:8px;top:543px;" width="15" height="15" viewBox="0 0 15 15"><rect x="0" y="0" width="15" height="15" fill="#fff" stroke="#222" stroke-width="0.6"/><rect x="0" y="0" width="3" height="3" fill="#222"/><rect x="0" y="6" width="3" height="3" fill="#222"/><rect x="0" y="12" width="3" height="3" fill="#222"/><rect x="3" y="3" width="3" height="3" fill="#222"/><rect x="3" y="9" width="3" height="3" fill="#222"/><rect x="6" y="0" width="3" height="3" fill="#222"/><rect x="6" y="6" width="3" height="3" fill="#222"/><rect x="6" y="12" width="3" height="3" fill="#222"/><rect x="9" y="3" width="3" height="3" fill="#222"/><rect x="9" y="9" width="3" height="3" fill="#222"/><rect x="12" y="0" width="3" height="3" fill="#222"/><rect x="12" y="6" width="3" height="3" fill="#222"/><rect x="12" y="12" width="3" height="3" fill="#222"/></svg>
<div class="a" style="left:5px;top:569px;width:22px;height:1px;background:#d8d8d8;"></div>
<svg class="a" style="left:8px;top:579px;" width="17" height="18" viewBox="0 0 17 18"><path d="M11 1.5 Q13 -0.5 15 1.5 Q17 3.5 15 5.5 L13.5 7 L9.5 3 Z" fill="#222"/><path d="M8.5 4.5 L12 8" stroke="#222" stroke-width="1.8"/><path d="M10 5.8 L2.5 13.3 Q1 15 1.2 16.3 Q2.5 16.5 4 15 L11.5 7.5" fill="#fff" stroke="#222" stroke-width="1.1"/><path d="M2 16 L7 11" stroke="#c8652a" stroke-width="1.6"/></svg>
<svg class="a" style="left:23px;top:594px" width="4" height="4" viewBox="0 0 4 4"><path d="M4 0 V4 H0 Z" fill="#707070"/></svg>
<svg class="a" style="left:8px;top:610px;" width="18" height="17" viewBox="0 0 18 17"><path d="M8 0.8 L15 7.8 L8 14.8 L1 7.8 Z" fill="#fff" stroke="#222" stroke-width="1.5" transform="rotate(0)"/><path d="M3.5 8.5 L12.5 8.5 L8 13 Z" fill="#d62027"/><path d="M12.5 11 L16 13 L16 16.5 L12.5 16.5 Z" fill="#d62027"/></svg>
<svg class="a" style="left:23px;top:625px" width="4" height="4" viewBox="0 0 4 4"><path d="M4 0 V4 H0 Z" fill="#707070"/></svg>
<div class="a" style="left:5px;top:636px;width:22px;height:1px;background:#d8d8d8;"></div>
<svg class="a" style="left:10px;top:653px;" width="12" height="12" viewBox="0 0 12 12"><path d="M6 0 V12 M0 6 H12" stroke="#b8b8b8" stroke-width="1.6"/></svg>
<div class="a" style="left:32px;top:118px;width:997px;height:20px;background:#e8e8e8;"></div>
<div class="a" style="left:32px;top:118px;width:152px;height:20px;background:#d9d9d9;"></div>
<svg class="a" style="left:33px;top:120px;" width="17" height="16" viewBox="0 0 17 16"><path d="M8.3 0 L16.6 8 H14.2 V15.5 H10.6 V10.5 H6 V15.5 H2.4 V8 H0 Z" fill="#2a2a2a"/></svg>
<div class="t" style="left:57.5px;top:122.24px;font-size:12px;color:#1a1a1a;font-weight:normal;letter-spacing:-0.12px;">Экран приветствия</div>
<div class="a" style="left:184px;top:118px;width:112px;height:20px;background:#cce4f7;"></div>
<div class="t" style="left:188.7px;top:122.24px;font-size:12px;color:#1a1a1a;font-weight:normal;letter-spacing:0.1px;">Безымянный-2</div>
<div class="a" style="left:296px;top:118px;width:22px;height:20px;background:#dadada;"></div>
<svg class="a" style="left:301px;top:121px;" width="12" height="12" viewBox="0 0 12 12"><path d="M6 0 V12 M0 6 H12" stroke="#b4b4b4" stroke-width="1.6"/></svg>
<div class="a" style="left:32px;top:138px;width:997px;height:1px;background:#3e9cc4;"></div>
<div class="a" style="left:32px;top:139px;width:997px;height:1px;background:#d7eef6;"></div>
<div class="a" style="left:32px;top:140px;width:996px;height:16px;background:#f3f3f3;"></div>
<div class="a" style="left:32px;top:140px;width:17px;height:567px;background:#f3f3f3;"></div>
<svg class="a" style="left:36px;top:143px;" width="10" height="10" viewBox="0 0 10 10"><path d="M1 1 H9 M1 1 V9" stroke="#777" stroke-width="0.9" stroke-dasharray="1 1.2"/><path d="M2 2 L8.5 8.5" stroke="#444" stroke-width="1"/><rect x="7" y="7" width="2" height="2" fill="#444"/></svg>
<div class="a" style="left:49px;top:155px;width:979px;height:1px;background:#e2e2e2;"></div>
<div class="a" style="left:48px;top:156px;width:1px;height:551px;background:#e2e2e2;"></div>
<svg class="a" style="left:0;top:0" width="1366" height="766" viewBox="0 0 1366 766"><rect x="56.01" y="152.6" width="1" height="2.4" fill="#777"/><rect x="63.19" y="153.7" width="1" height="1.3" fill="#808080"/><rect x="70.37" y="153.7" width="1" height="1.3" fill="#808080"/><rect x="77.55" y="153.7" width="1" height="1.3" fill="#808080"/><rect x="84.72" y="153.7" width="1" height="1.3" fill="#808080"/><rect x="91.90" y="150" width="1" height="5" fill="#6a6a6a"/><rect x="99.08" y="153.7" width="1" height="1.3" fill="#808080"/><rect x="106.25" y="153.7" width="1" height="1.3" fill="#808080"/><rect x="113.43" y="153.7" width="1" height="1.3" fill="#808080"/><rect x="120.61" y="153.7" width="1" height="1.3" fill="#808080"/><rect x="127.79" y="152.6" width="1" height="2.4" fill="#777"/><rect x="134.97" y="153.7" width="1" height="1.3" fill="#808080"/><rect x="142.14" y="153.7" width="1" height="1.3" fill="#808080"/><rect x="149.32" y="153.7" width="1" height="1.3" fill="#808080"/><rect x="156.50" y="153.7" width="1" height="1.3" fill="#808080"/><rect x="163.68" y="150" width="1" height="5" fill="#6a6a6a"/><rect x="170.85" y="153.7" width="1" height="1.3" fill="#808080"/><rect x="178.03" y="153.7" width="1" height="1.3" fill="#808080"/><rect x="185.21" y="153.7" width="1" height="1.3" fill="#808080"/><rect x="192.38" y="153.7" width="1" height="1.3" fill="#808080"/><rect x="199.56" y="152.6" width="1" height="2.4" fill="#777"/><rect x="206.74" y="153.7" width="1" height="1.3" fill="#808080"/><rect x="213.92" y="153.7" width="1" height="1.3" fill="#808080"/><rect x="221.09" y="153.7" width="1" height="1.3" fill="#808080"/><rect x="228.27" y="153.7" width="1" height="1.3" fill="#808080"/><rect x="235.45" y="150" width="1" height="5" fill="#6a6a6a"/><rect x="242.63" y="153.7" width="1" height="1.3" fill="#808080"/><rect x="249.81" y="153.7" width="1" height="1.3" fill="#808080"/><rect x="256.98" y="153.7" width="1" height="1.3" fill="#808080"/><rect x="264.16" y="153.7" width="1" height="1.3" fill="#808080"/><rect x="271.34" y="152.6" width="1" height="2.4" fill="#777"/><rect x="278.51" y="153.7" width="1" height="1.3" fill="#808080"/><rect x="285.69" y="153.7" width="1" height="1.3" fill="#808080"/><rect x="292.87" y="153.7" width="1" height="1.3" fill="#808080"/><rect x="300.05" y="153.7" width="1" height="1.3" fill="#808080"/><rect x="307.23" y="150" width="1" height="5" fill="#6a6a6a"/><rect x="314.40" y="153.7" width="1" height="1.3" fill="#808080"/><rect x="321.58" y="153.7" width="1" height="1.3" fill="#808080"/><rect x="328.76" y="153.7" width="1" height="1.3" fill="#808080"/><rect x="335.94" y="153.7" width="1" height="1.3" fill="#808080"/><rect x="343.11" y="152.6" width="1" height="2.4" fill="#777"/><rect x="350.29" y="153.7" width="1" height="1.3" fill="#808080"/><rect x="357.47" y="153.7" width="1" height="1.3" fill="#808080"/><rect x="364.64" y="153.7" width="1" height="1.3" fill="#808080"/><rect x="371.82" y="153.7" width="1" height="1.3" fill="#808080"/><rect x="379.00" y="150" width="1" height="5" fill="#6a6a6a"/><rect x="386.18" y="153.7" width="1" height="1.3" fill="#808080"/><rect x="393.36" y="153.7" width="1" height="1.3" fill="#808080"/><rect x="400.53" y="153.7" width="1" height="1.3" fill="#808080"/><rect x="407.71" y="153.7" width="1" height="1.3" fill="#808080"/><rect x="414.89" y="152.6" width="1" height="2.4" fill="#777"/><rect x="422.06" y="153.7" width="1" height="1.3" fill="#808080"/><rect x="429.24" y="153.7" width="1" height="1.3" fill="#808080"/><rect x="436.42" y="153.7" width="1" height="1.3" fill="#808080"/><rect x="443.60" y="153.7" width="1" height="1.3" fill="#808080"/><rect x="450.77" y="150" width="1" height="5" fill="#6a6a6a"/><rect x="457.95" y="153.7" width="1" height="1.3" fill="#808080"/><rect x="465.13" y="153.7" width="1" height="1.3" fill="#808080"/><rect x="472.31" y="153.7" width="1" height="1.3" fill="#808080"/><rect x="479.49" y="153.7" width="1" height="1.3" fill="#808080"/><rect x="486.66" y="152.6" width="1" height="2.4" fill="#777"/><rect x="493.84" y="153.7" width="1" height="1.3" fill="#808080"/><rect x="501.02" y="153.7" width="1" height="1.3" fill="#808080"/><rect x="508.19" y="153.7" width="1" height="1.3" fill="#808080"/><rect x="515.37" y="153.7" width="1" height="1.3" fill="#808080"/><rect x="522.55" y="150" width="1" height="5" fill="#6a6a6a"/><rect x="529.73" y="153.7" width="1" height="1.3" fill="#808080"/><rect x="536.90" y="153.7" width="1" height="1.3" fill="#808080"/><rect x="544.08" y="153.7" width="1" height="1.3" fill="#808080"/><rect x="551.26" y="153.7" width="1" height="1.3" fill="#808080"/><rect x="558.44" y="152.6" width="1" height="2.4" fill="#777"/><rect x="565.62" y="153.7" width="1" height="1.3" fill="#808080"/><rect x="572.79" y="153.7" width="1" height="1.3" fill="#808080"/><rect x="579.97" y="153.7" width="1" height="1.3" fill="#808080"/><rect x="587.15" y="153.7" width="1" height="1.3" fill="#808080"/><rect x="594.33" y="150" width="1" height="5" fill="#6a6a6a"/><rect x="601.50" y="153.7" width="1" height="1.3" fill="#808080"/><rect x="608.68" y="153.7" width="1" height="1.3" fill="#808080"/><rect x="615.86" y="153.7" width="1" height="1.3" fill="#808080"/><rect x="623.03" y="153.7" width="1" height="1.3" fill="#808080"/><rect x="630.21" y="152.6" width="1" height="2.4" fill="#777"/><rect x="637.39" y="153.7" width="1" height="1.3" fill="#808080"/><rect x="644.57" y="153.7" width="1" height="1.3" fill="#808080"/><rect x="651.75" y="153.7" width="1" height="1.3" fill="#808080"/><rect x="658.92" y="153.7" width="1" height="1.3" fill="#808080"/><rect x="666.10" y="150" width="1" height="5" fill="#6a6a6a"/><rect x="673.28" y="153.7" width="1" height="1.3" fill="#808080"/><rect x="680.45" y="153.7" width="1" height="1.3" fill="#808080"/><rect x="687.63" y="153.7" width="1" height="1.3" fill="#808080"/><rect x="694.81" y="153.7" width="1" height="1.3" fill="#808080"/><rect x="701.99" y="152.6" width="1" height="2.4" fill="#777"/><rect x="709.16" y="153.7" width="1" height="1.3" fill="#808080"/><rect x="716.34" y="153.7" width="1" height="1.3" fill="#808080"/><rect x="723.52" y="153.7" width="1" height="1.3" fill="#808080"/><rect x="730.70" y="153.7" width="1" height="1.3" fill="#808080"/><rect x="737.88" y="150" width="1" height="5" fill="#6a6a6a"/><rect x="745.05" y="153.7" width="1" height="1.3" fill="#808080"/><rect x="752.23" y="153.7" width="1" height="1.3" fill="#808080"/><rect x="759.41" y="153.7" width="1" height="1.3" fill="#808080"/><rect x="766.59" y="153.7" width="1" height="1.3" fill="#808080"/><rect x="773.76" y="152.6" width="1" height="2.4" fill="#777"/><rect x="780.94" y="153.7" width="1" height="1.3" fill="#808080"/><rect x="788.12" y="153.7" width="1" height="1.3" fill="#808080"/><rect x="795.30" y="153.7" width="1" height="1.3" fill="#808080"/><rect x="802.47" y="153.7" width="1" height="1.3" fill="#808080"/><rect x="809.65" y="150" width="1" height="5" fill="#6a6a6a"/><rect x="816.83" y="153.7" width="1" height="1.3" fill="#808080"/><rect x="824.00" y="153.7" width="1" height="1.3" fill="#808080"/><rect x="831.18" y="153.7" width="1" height="1.3" fill="#808080"/><rect x="838.36" y="153.7" width="1" height="1.3" fill="#808080"/><rect x="845.54" y="152.6" width="1" height="2.4" fill="#777"/><rect x="852.71" y="153.7" width="1" height="1.3" fill="#808080"/><rect x="859.89" y="153.7" width="1" height="1.3" fill="#808080"/><rect x="867.07" y="153.7" width="1" height="1.3" fill="#808080"/><rect x="874.25" y="153.7" width="1" height="1.3" fill="#808080"/><rect x="881.42" y="150" width="1" height="5" fill="#6a6a6a"/><rect x="888.60" y="153.7" width="1" height="1.3" fill="#808080"/><rect x="895.78" y="153.7" width="1" height="1.3" fill="#808080"/><rect x="902.96" y="153.7" width="1" height="1.3" fill="#808080"/><rect x="910.13" y="153.7" width="1" height="1.3" fill="#808080"/><rect x="917.31" y="152.6" width="1" height="2.4" fill="#777"/><rect x="924.49" y="153.7" width="1" height="1.3" fill="#808080"/><rect x="931.67" y="153.7" width="1" height="1.3" fill="#808080"/><rect x="938.85" y="153.7" width="1" height="1.3" fill="#808080"/><rect x="946.02" y="153.7" width="1" height="1.3" fill="#808080"/><rect x="953.20" y="150" width="1" height="5" fill="#6a6a6a"/><rect x="960.38" y="153.7" width="1" height="1.3" fill="#808080"/><rect x="967.55" y="153.7" width="1" height="1.3" fill="#808080"/><rect x="974.73" y="153.7" width="1" height="1.3" fill="#808080"/><rect x="981.91" y="153.7" width="1" height="1.3" fill="#808080"/><rect x="989.09" y="152.6" width="1" height="2.4" fill="#777"/><rect x="996.26" y="153.7" width="1" height="1.3" fill="#808080"/><rect x="1003.44" y="153.7" width="1" height="1.3" fill="#808080"/><rect x="1010.62" y="153.7" width="1" height="1.3" fill="#808080"/><rect x="1017.80" y="153.7" width="1" height="1.3" fill="#808080"/></svg>
<div class="t" style="left:84.27999999999997px;top:141.16px;font-size:9.5px;color:#858585;font-weight:normal;letter-spacing:0px;">200</div>
<div class="t" style="left:156.05500000000004px;top:141.16px;font-size:9.5px;color:#858585;font-weight:normal;letter-spacing:0px;">150</div>
<div class="t" style="left:227.83px;top:141.16px;font-size:9.5px;color:#858585;font-weight:normal;letter-spacing:0px;">100</div>
<div class="t" style="left:303.5450000000001px;top:141.16px;font-size:9.5px;color:#858585;font-weight:normal;letter-spacing:0px;">50</div>
<div class="t" style="left:376.66px;top:141.16px;font-size:9.5px;color:#858585;font-weight:normal;letter-spacing:0px;">0</div>
<div class="t" style="left:447.095px;top:141.16px;font-size:9.5px;color:#858585;font-weight:normal;letter-spacing:0px;">50</div>
<div class="t" style="left:514.93px;top:141.16px;font-size:9.5px;color:#858585;font-weight:normal;letter-spacing:0px;">100</div>
<div class="t" style="left:586.705px;top:141.16px;font-size:9.5px;color:#858585;font-weight:normal;letter-spacing:0px;">150</div>
<div class="t" style="left:658.48px;top:141.16px;font-size:9.5px;color:#858585;font-weight:normal;letter-spacing:0px;">200</div>
<div class="t" style="left:730.255px;top:141.16px;font-size:9.5px;color:#858585;font-weight:normal;letter-spacing:0px;">250</div>
<div class="t" style="left:802.03px;top:141.16px;font-size:9.5px;color:#858585;font-weight:normal;letter-spacing:0px;">300</div>
<div class="t" style="left:873.805px;top:141.16px;font-size:9.5px;color:#858585;font-weight:normal;letter-spacing:0px;">350</div>
<div class="t" style="left:945.58px;top:141.16px;font-size:9.5px;color:#858585;font-weight:normal;letter-spacing:0px;">400</div>
<div class="t" style="left:967px;top:140.73px;font-size:10px;color:#858585;font-weight:normal;letter-spacing:-0.1px;">миллиметры</div>
<svg class="a" style="left:0;top:0" width="1366" height="766" viewBox="0 0 1366 766"><rect x="47" y="679.77" width="1.3" height="1" fill="#808080"/><rect x="46" y="672.59" width="2.4" height="1" fill="#777"/><rect x="47" y="665.41" width="1.3" height="1" fill="#808080"/><rect x="47" y="658.23" width="1.3" height="1" fill="#808080"/><rect x="47" y="651.06" width="1.3" height="1" fill="#808080"/><rect x="47" y="643.88" width="1.3" height="1" fill="#808080"/><rect x="43.5" y="636.70" width="5" height="1" fill="#6a6a6a"/><rect x="47" y="629.52" width="1.3" height="1" fill="#808080"/><rect x="47" y="622.35" width="1.3" height="1" fill="#808080"/><rect x="47" y="615.17" width="1.3" height="1" fill="#808080"/><rect x="47" y="607.99" width="1.3" height="1" fill="#808080"/><rect x="46" y="600.81" width="2.4" height="1" fill="#777"/><rect x="47" y="593.63" width="1.3" height="1" fill="#808080"/><rect x="47" y="586.46" width="1.3" height="1" fill="#808080"/><rect x="47" y="579.28" width="1.3" height="1" fill="#808080"/><rect x="47" y="572.10" width="1.3" height="1" fill="#808080"/><rect x="43.5" y="564.93" width="5" height="1" fill="#6a6a6a"/><rect x="47" y="557.75" width="1.3" height="1" fill="#808080"/><rect x="47" y="550.57" width="1.3" height="1" fill="#808080"/><rect x="47" y="543.39" width="1.3" height="1" fill="#808080"/><rect x="47" y="536.22" width="1.3" height="1" fill="#808080"/><rect x="46" y="529.04" width="2.4" height="1" fill="#777"/><rect x="47" y="521.86" width="1.3" height="1" fill="#808080"/><rect x="47" y="514.68" width="1.3" height="1" fill="#808080"/><rect x="47" y="507.51" width="1.3" height="1" fill="#808080"/><rect x="47" y="500.33" width="1.3" height="1" fill="#808080"/><rect x="43.5" y="493.15" width="5" height="1" fill="#6a6a6a"/><rect x="47" y="485.97" width="1.3" height="1" fill="#808080"/><rect x="47" y="478.80" width="1.3" height="1" fill="#808080"/><rect x="47" y="471.62" width="1.3" height="1" fill="#808080"/><rect x="47" y="464.44" width="1.3" height="1" fill="#808080"/><rect x="46" y="457.26" width="2.4" height="1" fill="#777"/><rect x="47" y="450.09" width="1.3" height="1" fill="#808080"/><rect x="47" y="442.91" width="1.3" height="1" fill="#808080"/><rect x="47" y="435.73" width="1.3" height="1" fill="#808080"/><rect x="47" y="428.55" width="1.3" height="1" fill="#808080"/><rect x="43.5" y="421.38" width="5" height="1" fill="#6a6a6a"/><rect x="47" y="414.20" width="1.3" height="1" fill="#808080"/><rect x="47" y="407.02" width="1.3" height="1" fill="#808080"/><rect x="47" y="399.84" width="1.3" height="1" fill="#808080"/><rect x="47" y="392.67" width="1.3" height="1" fill="#808080"/><rect x="46" y="385.49" width="2.4" height="1" fill="#777"/><rect x="47" y="378.31" width="1.3" height="1" fill="#808080"/><rect x="47" y="371.13" width="1.3" height="1" fill="#808080"/><rect x="47" y="363.96" width="1.3" height="1" fill="#808080"/><rect x="47" y="356.78" width="1.3" height="1" fill="#808080"/><rect x="43.5" y="349.60" width="5" height="1" fill="#6a6a6a"/><rect x="47" y="342.42" width="1.3" height="1" fill="#808080"/><rect x="47" y="335.25" width="1.3" height="1" fill="#808080"/><rect x="47" y="328.07" width="1.3" height="1" fill="#808080"/><rect x="47" y="320.89" width="1.3" height="1" fill="#808080"/><rect x="46" y="313.71" width="2.4" height="1" fill="#777"/><rect x="47" y="306.54" width="1.3" height="1" fill="#808080"/><rect x="47" y="299.36" width="1.3" height="1" fill="#808080"/><rect x="47" y="292.18" width="1.3" height="1" fill="#808080"/><rect x="47" y="285.00" width="1.3" height="1" fill="#808080"/><rect x="43.5" y="277.83" width="5" height="1" fill="#6a6a6a"/><rect x="47" y="270.65" width="1.3" height="1" fill="#808080"/><rect x="47" y="263.47" width="1.3" height="1" fill="#808080"/><rect x="47" y="256.29" width="1.3" height="1" fill="#808080"/><rect x="47" y="249.12" width="1.3" height="1" fill="#808080"/><rect x="46" y="241.94" width="2.4" height="1" fill="#777"/><rect x="47" y="234.76" width="1.3" height="1" fill="#808080"/><rect x="47" y="227.58" width="1.3" height="1" fill="#808080"/><rect x="47" y="220.41" width="1.3" height="1" fill="#808080"/><rect x="47" y="213.23" width="1.3" height="1" fill="#808080"/><rect x="43.5" y="206.05" width="5" height="1" fill="#6a6a6a"/><rect x="47" y="198.87" width="1.3" height="1" fill="#808080"/><rect x="47" y="191.70" width="1.3" height="1" fill="#808080"/><rect x="47" y="184.52" width="1.3" height="1" fill="#808080"/><rect x="47" y="177.34" width="1.3" height="1" fill="#808080"/><rect x="46" y="170.16" width="2.4" height="1" fill="#777"/><rect x="47" y="162.99" width="1.3" height="1" fill="#808080"/></svg>
<div class="t" style="left:34.5px;top:638.64px;font-size:9.5px;color:#858585;transform-origin:0 0;transform:rotate(-90deg)">0</div>
<div class="t" style="left:34.5px;top:568.00px;font-size:9.5px;color:#858585;transform-origin:0 0;transform:rotate(-90deg)">50</div>
<div class="t" style="left:34.5px;top:500.37px;font-size:9.5px;color:#858585;transform-origin:0 0;transform:rotate(-90deg)">100</div>
<div class="t" style="left:34.5px;top:428.60px;font-size:9.5px;color:#858585;transform-origin:0 0;transform:rotate(-90deg)">150</div>
<div class="t" style="left:34.5px;top:356.82px;font-size:9.5px;color:#858585;transform-origin:0 0;transform:rotate(-90deg)">200</div>
<div class="t" style="left:34.5px;top:285.05px;font-size:9.5px;color:#858585;transform-origin:0 0;transform:rotate(-90deg)">250</div>
<div class="t" style="left:34.5px;top:213.27px;font-size:9.5px;color:#858585;transform-origin:0 0;transform:rotate(-90deg)">300</div>
<div class="a" style="left:49px;top:156px;width:979px;height:534px;background:#ffffff;"></div>
<div class="a" style="left:388px;top:216px;width:301px;height:427px;background:#c4c4c4;"></div>
<svg class="a" style="left:381px;top:211px;" width="302" height="427" viewBox="0 0 302 427">
<defs>
<linearGradient id="sky" gradientUnits="userSpaceOnUse" x1="0" y1="0" x2="0" y2="97"><stop offset="0" stop-color="#8c95a7"/><stop offset="1" stop-color="#636e83"/></linearGradient>
<linearGradient id="cA" gradientUnits="userSpaceOnUse" x1="0" y1="78" x2="0" y2="165"><stop offset="0" stop-color="#97a1b3"/><stop offset="1" stop-color="#737e92"/></linearGradient>
<linearGradient id="cB" gradientUnits="userSpaceOnUse" x1="0" y1="146" x2="0" y2="250"><stop offset="0" stop-color="#838da1"/><stop offset="1" stop-color="#525e74"/></linearGradient>
<linearGradient id="cC" gradientUnits="userSpaceOnUse" x1="0" y1="219" x2="0" y2="345"><stop offset="0" stop-color="#8590a3"/><stop offset="0.64" stop-color="#58647b"/><stop offset="1" stop-color="#47536a"/></linearGradient>
<linearGradient id="cD" gradientUnits="userSpaceOnUse" x1="0" y1="288" x2="0" y2="427"><stop offset="0" stop-color="#7a8599"/><stop offset="0.3" stop-color="#616c82"/><stop offset="0.66" stop-color="#313d53"/><stop offset="1" stop-color="#0b1525"/></linearGradient>
<linearGradient id="earw" x1="0" y1="0" x2="0.4" y2="1"><stop offset="0" stop-color="#ffffff"/><stop offset="0.55" stop-color="#f2f2f2"/><stop offset="1" stop-color="#d4d4d6"/></linearGradient>
<linearGradient id="brow" x1="0" y1="0" x2="1" y2="1"><stop offset="0" stop-color="#ececee"/><stop offset="0.6" stop-color="#d3d4d6"/><stop offset="1" stop-color="#c0c1c3"/></linearGradient>
<radialGradient id="iris"><stop offset="0.3" stop-color="#2a86d8"/><stop offset="0.75" stop-color="#48aef2"/><stop offset="1" stop-color="#2070c0"/></radialGradient>
</defs>
<rect x="0" y="0" width="302" height="427" fill="url(#sky)"/>
<path d="M0 97.2 Q30 94 55 94.8 L240 79.4 Q250 82 257.5 82.8 Q262 87 266 87 Q270 83 276 82.8 Q282 81 288 81 L302 78.5 L302 427 L0 427 Z" fill="url(#cA)"/>
<path d="M0 146.5 Q10 147 15.6 150.4 Q19 156 22 158.2 L47 156.6 L257 178 Q266 170 274.5 167 Q282 168 288 169.4 L302 167.7 L302 427 L0 427 Z" fill="url(#cB)"/>
<path d="M0 246.6 Q10 240 18.3 233.8 Q26 224 33.8 219.2 L60 225 L265 243 Q275 241 281.8 239.5 Q288 232 291.2 224.2 Q296 220 302 219.5 L302 427 L0 427 Z" fill="url(#cC)"/>
<path d="M0 316.8 Q12 302 22 292 Q28 287.5 33 287.9 Q40 289 44.4 296.8 Q48 304 53.3 310 L66 328 L80 345 L200 352 L219 344 Q219 362 227 366 Q240 369 247 359 Q251 349 251.6 341.2 Q257 337 262 336 Q272 333 283 330.8 Q292 328 302 325.5 L302 427 L0 427 Z" fill="url(#cD)"/>
<circle cx="136.9" cy="238.7" r="0.9" fill="#c4ccd8" opacity="0.39"/><circle cx="256.1" cy="82.9" r="1.1" fill="#c4ccd8" opacity="0.39"/><circle cx="184.7" cy="81.4" r="0.9" fill="#c4ccd8" opacity="0.34"/><circle cx="29.8" cy="343.9" r="1.1" fill="#c4ccd8" opacity="0.44"/><circle cx="179.2" cy="169.8" r="0.9" fill="#c4ccd8" opacity="0.45"/><circle cx="185.2" cy="69.3" r="0.7" fill="#c4ccd8" opacity="0.50"/><circle cx="21.7" cy="18.0" r="0.7" fill="#c4ccd8" opacity="0.43"/><circle cx="233.3" cy="140.4" r="1.1" fill="#c4ccd8" opacity="0.50"/><circle cx="156.7" cy="272.6" r="0.9" fill="#c4ccd8" opacity="0.25"/><circle cx="28.2" cy="278.7" r="0.9" fill="#c4ccd8" opacity="0.55"/><circle cx="297.7" cy="356.7" r="1.1" fill="#c4ccd8" opacity="0.33"/><circle cx="227.4" cy="218.9" r="0.7" fill="#c4ccd8" opacity="0.27"/><circle cx="229.8" cy="171.6" r="0.9" fill="#c4ccd8" opacity="0.37"/><circle cx="286.6" cy="359.7" r="0.7" fill="#c4ccd8" opacity="0.31"/><circle cx="277.4" cy="25.0" r="0.9" fill="#c4ccd8" opacity="0.54"/><circle cx="120.6" cy="33.7" r="1.1" fill="#c4ccd8" opacity="0.31"/><circle cx="202.8" cy="144.8" r="0.9" fill="#c4ccd8" opacity="0.35"/><circle cx="288.4" cy="322.1" r="0.7" fill="#c4ccd8" opacity="0.29"/><circle cx="212.3" cy="7.6" r="0.9" fill="#c4ccd8" opacity="0.49"/><circle cx="55.6" cy="238.5" r="0.9" fill="#c4ccd8" opacity="0.40"/><circle cx="294.6" cy="327.0" r="0.9" fill="#c4ccd8" opacity="0.44"/><circle cx="37.5" cy="180.1" r="0.7" fill="#c4ccd8" opacity="0.25"/><circle cx="258.8" cy="413.4" r="1.1" fill="#c4ccd8" opacity="0.34"/><circle cx="264.9" cy="91.7" r="0.9" fill="#c4ccd8" opacity="0.55"/><circle cx="181.2" cy="245.9" r="0.7" fill="#c4ccd8" opacity="0.55"/><circle cx="66.1" cy="111.7" r="1.1" fill="#c4ccd8" opacity="0.35"/><circle cx="90.7" cy="33.9" r="0.7" fill="#c4ccd8" opacity="0.31"/><circle cx="191.4" cy="9.5" r="0.9" fill="#c4ccd8" opacity="0.36"/><circle cx="137.1" cy="406.8" r="0.9" fill="#c4ccd8" opacity="0.50"/><circle cx="43.2" cy="165.5" r="1.1" fill="#c4ccd8" opacity="0.30"/><circle cx="271.9" cy="347.3" r="0.7" fill="#c4ccd8" opacity="0.47"/><circle cx="49.9" cy="267.8" r="1.1" fill="#c4ccd8" opacity="0.31"/><circle cx="284.2" cy="374.4" r="1.1" fill="#c4ccd8" opacity="0.27"/><circle cx="17.0" cy="48.9" r="1.1" fill="#c4ccd8" opacity="0.54"/><circle cx="73.6" cy="299.6" r="0.9" fill="#c4ccd8" opacity="0.38"/><circle cx="270.8" cy="209.7" r="1.1" fill="#c4ccd8" opacity="0.30"/><circle cx="216.2" cy="32.0" r="0.7" fill="#c4ccd8" opacity="0.39"/><circle cx="196.4" cy="262.3" r="0.7" fill="#c4ccd8" opacity="0.33"/><circle cx="274.5" cy="88.9" r="0.7" fill="#c4ccd8" opacity="0.27"/><circle cx="124.8" cy="107.9" r="0.7" fill="#c4ccd8" opacity="0.30"/><circle cx="112.2" cy="243.9" r="0.7" fill="#c4ccd8" opacity="0.28"/><circle cx="44.0" cy="192.6" r="0.9" fill="#c4ccd8" opacity="0.45"/><circle cx="207.6" cy="249.0" r="0.7" fill="#c4ccd8" opacity="0.43"/><circle cx="276.4" cy="202.9" r="0.9" fill="#c4ccd8" opacity="0.46"/><circle cx="288.0" cy="12.0" r="1.1" fill="#c4ccd8" opacity="0.27"/><circle cx="22.9" cy="134.0" r="0.7" fill="#c4ccd8" opacity="0.55"/><circle cx="25.3" cy="232.9" r="1.1" fill="#c4ccd8" opacity="0.26"/><circle cx="280.1" cy="313.3" r="0.7" fill="#c4ccd8" opacity="0.49"/><circle cx="273.8" cy="151.1" r="1.1" fill="#c4ccd8" opacity="0.39"/><circle cx="26.0" cy="363.9" r="0.7" fill="#c4ccd8" opacity="0.51"/><circle cx="172.6" cy="266.1" r="0.9" fill="#c4ccd8" opacity="0.36"/><circle cx="6.7" cy="33.4" r="0.7" fill="#c4ccd8" opacity="0.44"/><circle cx="297.0" cy="373.4" r="1.1" fill="#c4ccd8" opacity="0.35"/><circle cx="279.5" cy="295.2" r="0.9" fill="#c4ccd8" opacity="0.38"/><circle cx="251.2" cy="38.3" r="1.1" fill="#c4ccd8" opacity="0.26"/><circle cx="181.0" cy="205.5" r="0.7" fill="#c4ccd8" opacity="0.54"/><circle cx="36.4" cy="331.4" r="1.1" fill="#c4ccd8" opacity="0.53"/><circle cx="78.7" cy="7.8" r="0.9" fill="#c4ccd8" opacity="0.29"/><circle cx="184.1" cy="221.2" r="0.9" fill="#c4ccd8" opacity="0.45"/><circle cx="133.8" cy="378.4" r="0.9" fill="#c4ccd8" opacity="0.37"/><circle cx="77.2" cy="270.0" r="0.7" fill="#c4ccd8" opacity="0.51"/><circle cx="116.8" cy="248.5" r="0.9" fill="#c4ccd8" opacity="0.31"/><circle cx="42.8" cy="150.7" r="0.7" fill="#c4ccd8" opacity="0.46"/><circle cx="284.2" cy="119.5" r="0.7" fill="#c4ccd8" opacity="0.28"/><circle cx="142.5" cy="392.7" r="0.9" fill="#c4ccd8" opacity="0.36"/><circle cx="156.9" cy="286.0" r="1.1" fill="#c4ccd8" opacity="0.50"/><circle cx="293.7" cy="193.5" r="0.7" fill="#c4ccd8" opacity="0.50"/><circle cx="85.3" cy="258.8" r="1.1" fill="#c4ccd8" opacity="0.46"/><circle cx="171.9" cy="133.1" r="1.1" fill="#c4ccd8" opacity="0.26"/><circle cx="43.2" cy="194.5" r="0.7" fill="#c4ccd8" opacity="0.48"/><circle cx="81.9" cy="331.1" r="0.7" fill="#c4ccd8" opacity="0.55"/><circle cx="37.1" cy="48.9" r="1.1" fill="#c4ccd8" opacity="0.45"/><circle cx="242.0" cy="406.5" r="1.1" fill="#c4ccd8" opacity="0.31"/><circle cx="246.9" cy="110.8" r="1.1" fill="#c4ccd8" opacity="0.25"/><circle cx="142.8" cy="303.7" r="0.7" fill="#c4ccd8" opacity="0.32"/>
<path d="M151.5 102 L138.6 103 L137.4 100.4 C133 80 120 50 110 36 Q104 27 97 26.6 Q90 27 82 38 C72 55 63 80 58 102 L50 151.7 L45.5 180 L44.9 192 Q38 205 35.7 219.5 Q35.5 228 37 233.8 L46.2 262.6 L50.1 279 Q52.5 295 56.8 306.4 Q62 318 69.3 329 L95.6 347.9 L106 356.4 L121.6 366.9 L138.6 386.4 L151.7 400.1 L152 400.1 L152 102 Z" fill="#2c2c2e"/>
<g transform="matrix(-1 0 0 1 303 0)"><path d="M151.5 102 L138.6 103 L137.4 100.4 C133 80 120 50 110 36 Q104 27 97 26.6 Q90 27 82 38 C72 55 63 80 58 102 L50 151.7 L45.5 180 L44.9 192 Q38 205 35.7 219.5 Q35.5 228 37 233.8 L46.2 262.6 L50.1 279 Q52.5 295 56.8 306.4 Q62 318 69.3 329 L95.6 347.9 L106 356.4 L121.6 366.9 L138.6 386.4 L151.7 400.1 L152 400.1 L152 102 Z" fill="#2c2c2e"/></g>

<path d="M58 100 L50 151.7 Q70 146 83.8 138.6 Q66 128 62 110 Z" fill="#3a3a3c"/>
<path d="M97 26.6 C111 30 128 65 137.4 100.4 L138.6 103 Q126 124 101 133 Q84 139 72 130 Q59 118 58 100 C61 70 80 31 97 26.6 Z" fill="#29292b"/>
<path d="M92 33 C80 50 67 80 64.5 104 Q65 120 72 128 Q79 119 83 105 L84 61 Q85 45 92 33 Z" fill="#3e3e40"/>
<path d="M94 31 C106 36 121 62 128 92 L130.5 102 Q120 124 90 137 Q80 136 73.5 130 Q83 121 86.5 108 Q83.5 90 84 61 Q85 42 94 31 Z" fill="#a8a9ab"/>
<path d="M99.5 70.4 Q110 72 114.5 82 Q121 100 121 118 L101 131 Q89 132 86.5 120 Q85 100 85.5 85 Q88.5 72 99.5 70.4 Z" fill="url(#earw)"/>
<path d="M50 151.7 Q68 146 83.8 138.6 Q108 126 121.6 104.7 L138.6 103 L151.5 102 L151.5 170 L97 179 L86.7 183 L63.2 188.8 L45.5 185 Z" fill="#2f2f31"/>
<path d="M132 108 Q140 130 146.4 163.4 L141 160 Q136 132 127 110 Z" fill="#39393b"/>
<path d="M53.2 151.7 Q66 144 81.2 141.2 Q96 146 110 153 Q102 162 98.2 172.6 Q80 168 63 162 Z" fill="#252527"/>
<path d="M49.9 151.7 L53.2 151.7 L63 162 Q80 168 98.2 172.6 L97 179 L86.7 183 L63.2 188.8 L50.8 192 L45.5 180 Z" fill="#3a3a3c"/>
<path d="M138.6 103 L151.5 125.6 L151.5 102 Z" fill="#232325"/>
<path d="M151.5 126.9 L145.1 164.7 Q137 155 128.2 153 Q118 152 112 153 Q104 160 102 167 L97 179 L86.7 183 L63.2 188.8 L50.8 192 L50.5 215 L52.3 234.6 L55 249 L59.9 259.4 L60.9 273 L66.2 283.5 L78.7 297 L80.8 301.2 L93.3 322.1 L105 339.5 L112.8 338.2 L117.7 338.1 L128.2 359 L151.7 378.5 Z" fill="#f5f5f5"/>
<path d="M112 153 Q130 152 145.1 164.7 L145 176 Q135 168 121.6 166 Q110 166 102 172 L102 167 Q104 160 112 153 Z" fill="#fafafa"/>
<path d="M121.6 166 Q135 168 145 176 L145 186 Q136 176 124 175 Z" fill="#cdcecf"/>
<path d="M63.2 188.8 Q85 182 110 178 Q124 188 128 206 L121 214 Q112 199 98 194 Q80 189 63.2 190.5 Z" fill="url(#brow)"/>
<path d="M120.3 215.1 L143.9 202 L142.5 213.8 L128.2 228.2 L117.7 243.9 Q120.5 228 120.3 215.1 Z" fill="#c0c1c3"/>
<path d="M139.9 214 L145.2 210 L145.2 254.3 L141 250 Z" fill="#c8c9cb"/>
<path d="M145.7 246.8 L151.5 236.8 L151.5 256.8 Z" fill="#c9cacc"/>
<path d="M51 205 Q54 235 61 257 Q65 266 68 275 Q72 285 77.6 295 Q86 305 97.5 311.7 Q108 318 119 322 Q135 328 153 331 L153 326 Q135 322 119 313.8 L105.8 309.6 Q96 300 88.1 290.8 Q79 280 72 270 L65 259.4 Q57 240 51 205 Z" fill="#c7c8ca"/>
<path d="M95.5 240 L101 250 L107.3 267.4 L104 300 L99.4 289 Q97 262 95.5 240 Z" fill="#c6c7c9"/>
<path d="M110 250 Q120 275 126 283 L125.8 298 Q116 280 110 250 Z" fill="#dedfe0"/>
<path d="M99 311 Q112 324 125 330 Q140 335.3 153 335.3 L153 340 Q135 340 120 334 Q105 326 99 311 Z" fill="#c4c5c7"/>
<path d="M78 199.2 Q92 196.8 104.9 197.2 Q117 200.5 123 217.5 Q114 214.6 107.6 213.6 Q94 210 81.4 200.6 Z" fill="#2a2220"/>
<clipPath id="EC"><path d="M85 200.4 Q95 198.2 104.9 198.2 Q114.5 201.5 119.5 212.8 Q110 212.4 104 211.6 Q93 207 85 200.4 Z"/></clipPath>
<g clip-path="url(#EC)"><circle cx="105" cy="204.6" r="10.2" fill="url(#iris)"/><circle cx="105" cy="204.6" r="3.4" fill="#141414"/></g>

<g transform="matrix(-1 0 0 1 303 0)">
<path d="M58 100 L50 151.7 Q70 146 83.8 138.6 Q66 128 62 110 Z" fill="#3a3a3c"/>
<path d="M97 26.6 C111 30 128 65 137.4 100.4 L138.6 103 Q126 124 101 133 Q84 139 72 130 Q59 118 58 100 C61 70 80 31 97 26.6 Z" fill="#29292b"/>
<path d="M92 33 C80 50 67 80 64.5 104 Q65 120 72 128 Q79 119 83 105 L84 61 Q85 45 92 33 Z" fill="#3e3e40"/>
<path d="M94 31 C106 36 121 62 128 92 L130.5 102 Q120 124 90 137 Q80 136 73.5 130 Q83 121 86.5 108 Q83.5 90 84 61 Q85 42 94 31 Z" fill="#a8a9ab"/>
<path d="M99.5 70.4 Q110 72 114.5 82 Q121 100 121 118 L101 131 Q89 132 86.5 120 Q85 100 85.5 85 Q88.5 72 99.5 70.4 Z" fill="url(#earw)"/>
<path d="M50 151.7 Q68 146 83.8 138.6 Q108 126 121.6 104.7 L138.6 103 L151.5 102 L151.5 170 L97 179 L86.7 183 L63.2 188.8 L45.5 185 Z" fill="#2f2f31"/>
<path d="M132 108 Q140 130 146.4 163.4 L141 160 Q136 132 127 110 Z" fill="#39393b"/>
<path d="M53.2 151.7 Q66 144 81.2 141.2 Q96 146 110 153 Q102 162 98.2 172.6 Q80 168 63 162 Z" fill="#252527"/>
<path d="M49.9 151.7 L53.2 151.7 L63 162 Q80 168 98.2 172.6 L97 179 L86.7 183 L63.2 188.8 L50.8 192 L45.5 180 Z" fill="#3a3a3c"/>
<path d="M138.6 103 L151.5 125.6 L151.5 102 Z" fill="#232325"/>
<path d="M151.5 126.9 L145.1 164.7 Q137 155 128.2 153 Q118 152 112 153 Q104 160 102 167 L97 179 L86.7 183 L63.2 188.8 L50.8 192 L50.5 215 L52.3 234.6 L55 249 L59.9 259.4 L60.9 273 L66.2 283.5 L78.7 297 L80.8 301.2 L93.3 322.1 L105 339.5 L112.8 338.2 L117.7 338.1 L128.2 359 L151.7 378.5 Z" fill="#f5f5f5"/>
<path d="M112 153 Q130 152 145.1 164.7 L145 176 Q135 168 121.6 166 Q110 166 102 172 L102 167 Q104 160 112 153 Z" fill="#fafafa"/>
<path d="M121.6 166 Q135 168 145 176 L145 186 Q136 176 124 175 Z" fill="#cdcecf"/>
<path d="M63.2 188.8 Q85 182 110 178 Q124 188 128 206 L121 214 Q112 199 98 194 Q80 189 63.2 190.5 Z" fill="url(#brow)"/>
<path d="M120.3 215.1 L143.9 202 L142.5 213.8 L128.2 228.2 L117.7 243.9 Q120.5 228 120.3 215.1 Z" fill="#c0c1c3"/>
<path d="M139.9 214 L145.2 210 L145.2 254.3 L141 250 Z" fill="#c8c9cb"/>
<path d="M145.7 246.8 L151.5 236.8 L151.5 256.8 Z" fill="#c9cacc"/>
<path d="M51 205 Q54 235 61 257 Q65 266 68 275 Q72 285 77.6 295 Q86 305 97.5 311.7 Q108 318 119 322 Q135 328 153 331 L153 326 Q135 322 119 313.8 L105.8 309.6 Q96 300 88.1 290.8 Q79 280 72 270 L65 259.4 Q57 240 51 205 Z" fill="#c7c8ca"/>
<path d="M95.5 240 L101 250 L107.3 267.4 L104 300 L99.4 289 Q97 262 95.5 240 Z" fill="#c6c7c9"/>
<path d="M110 250 Q120 275 126 283 L125.8 298 Q116 280 110 250 Z" fill="#dedfe0"/>
<path d="M99 311 Q112 324 125 330 Q140 335.3 153 335.3 L153 340 Q135 340 120 334 Q105 326 99 311 Z" fill="#c4c5c7"/>
<path d="M78 199.2 Q92 196.8 104.9 197.2 Q117 200.5 123 217.5 Q114 214.6 107.6 213.6 Q94 210 81.4 200.6 Z" fill="#2a2220"/>
<clipPath id="EC2"><path d="M85 200.4 Q95 198.2 104.9 198.2 Q114.5 201.5 119.5 212.8 Q110 212.4 104 211.6 Q93 207 85 200.4 Z"/></clipPath>
<g clip-path="url(#EC2)"><circle cx="105" cy="204.6" r="10.2" fill="url(#iris)"/><circle cx="105" cy="204.6" r="3.4" fill="#141414"/></g>
</g>
<path d="M151.5 126.9 L145.1 164.7 L144.5 230 L146 275 L151.5 281 L157 275 L158.5 230 L157.9 164.7 Z" fill="#f5f5f5"/>
<path d="M145 168 L144.5 230 L146 275 L148 270 L147 200 Z" fill="#d6d7d9"/>
<path d="M158 168 L158.5 230 L157 275 L155 270 L156 200 Z" fill="#dcdddf"/>
<path d="M144 258 L151.5 246 L159 258 L151.5 276 Z" fill="#cdced0"/>
<path d="M117.7 338.5 Q135 341 151.7 342 Q168 341 185.3 338.5 L175 355 L151.7 378 L128 355 Z" fill="#f6f6f6"/>
<path d="M130.3 310 L172.5 310 L172.5 325 Q151.5 329.5 130.3 325 Z" fill="#c3c4c6"/>
<path d="M129 283.2 Q140 281 151.2 280.5 Q162 281 173.4 283.2 Q177.5 290 176.7 298.2 Q175.5 306 169.5 311.2 Q160 314 151.2 319.7 Q142 314 133 311.2 Q127 306 125.8 298.2 Q125.5 290 129 283.2 Z" fill="#2e2e30"/>
<circle cx="134.9" cy="300.8" r="4.3" fill="#222224"/><circle cx="167.9" cy="300.8" r="4.3" fill="#222224"/>
<path d="M151.5 293 L151.5 317" stroke="#1e1e20" stroke-width="1.3"/>
<path d="M132.3 326.9 Q142 325 151.5 324.6 Q161 325 170.7 326.9 Q161 330.5 151.5 329.8 Q142 330.5 132.3 326.9 Z" fill="#1b1b1c"/>
</svg>
<div class="a" style="left:381px;top:211px;width:302px;height:427px;border:1px solid rgba(190,194,202,0.55)"></div>
<div class="a" style="left:1012px;top:157px;width:16px;height:17px;background:#e8e8e8;"></div>
<svg class="a" style="left:1016px;top:163px;" width="8" height="6" viewBox="0 0 8 6"><path d="M0.8 5 L4 1.5 L7.2 5" fill="none" stroke="#333" stroke-width="1.8"/></svg>
<div class="a" style="left:1012px;top:285px;width:15px;height:277px;background:#cbcbcb;"></div>
<div class="a" style="left:1012px;top:673px;width:16px;height:17px;background:#e8e8e8;"></div>
<svg class="a" style="left:1016px;top:679px;" width="8" height="6" viewBox="0 0 8 6"><path d="M0.8 1 L4 4.5 L7.2 1" fill="none" stroke="#333" stroke-width="1.8"/></svg>
<div class="a" style="left:1028px;top:118px;width:2px;height:611px;background:#f2f2f2;"></div>
<div class="a" style="left:1030px;top:118px;width:1px;height:611px;background:#c8c8c8;"></div>
<div class="a" style="left:1031px;top:118px;width:2px;height:611px;background:#f2f2f2;"></div>
<div class="a" style="left:49px;top:690px;width:979px;height:17px;background:#f2f2f2;"></div>
<div class="a" style="left:49px;top:690px;width:148px;height:1px;background:#a6a6a6;"></div>
<div class="a" style="left:285px;top:690px;width:248px;height:1px;background:#a6a6a6;"></div>
<svg class="a" style="left:53px;top:694px;" width="9" height="10" viewBox="0 0 9 10"><path d="M0.5 2.5 L2.5 0.5 H8.5 V9.5 H0.5 Z" fill="#fff" stroke="#777" stroke-width="1"/><path d="M4.5 3 V8 M2 5.5 H7" stroke="#777" stroke-width="1"/></svg>
<svg class="a" style="left:68px;top:694px;" width="11" height="10" viewBox="0 0 11 10"><path d="M0.75 0 V10" stroke="#aaa" stroke-width="1.5"/><path d="M10 0 L3 5 L10 10 Z" fill="#aaa"/></svg>
<svg class="a" style="left:87px;top:694px;" width="8" height="10" viewBox="0 0 8 10"><path d="M7.5 0 L0 5 L7.5 10 Z" fill="#aaa"/></svg>
<div class="t" style="left:101px;top:692.84px;font-size:12px;color:#a8a8a8;font-weight:normal;letter-spacing:0px;">1</div>
<div class="t" style="left:113px;top:692.84px;font-size:12px;color:#a8a8a8;font-weight:normal;letter-spacing:-0.3px;">из</div>
<div class="t" style="left:131px;top:692.84px;font-size:12px;color:#a8a8a8;font-weight:normal;letter-spacing:0px;">1</div>
<svg class="a" style="left:145px;top:694px;" width="8" height="10" viewBox="0 0 8 10"><path d="M0.5 0 L8 5 L0.5 10 Z" fill="#aaa"/></svg>
<svg class="a" style="left:160px;top:694px;" width="11" height="10" viewBox="0 0 11 10"><path d="M0 0 L7 5 L0 10 Z" fill="#aaa"/><path d="M9.25 0 V10" stroke="#aaa" stroke-width="1.5"/></svg>
<svg class="a" style="left:176px;top:694px;" width="9" height="10" viewBox="0 0 9 10"><path d="M0.5 2.5 L2.5 0.5 H8.5 V9.5 H0.5 Z" fill="#fff" stroke="#777" stroke-width="1"/><path d="M4.5 3 V8 M2 5.5 H7" stroke="#777" stroke-width="1"/></svg>
<svg class="a" style="left:196px;top:690px;" width="90" height="17" viewBox="0 0 90 17"><path d="M1 0.5 L5.5 16 H83.5 L88 0.5" fill="#fff" stroke="#8a8a8a" stroke-width="1"/></svg>
<div class="t" style="left:209.5px;top:692.77px;font-size:11.5px;color:#111;font-weight:normal;letter-spacing:0.05px;">Страница 1</div>
<svg class="a" style="left:531px;top:692px;" width="5" height="14" viewBox="0 0 5 14"><rect x="0" y="0" width="1" height="1" fill="#aaa"/><rect x="2" y="2" width="1" height="1" fill="#aaa"/><rect x="0" y="4" width="1" height="1" fill="#aaa"/><rect x="2" y="6" width="1" height="1" fill="#aaa"/><rect x="0" y="8" width="1" height="1" fill="#aaa"/><rect x="2" y="10" width="1" height="1" fill="#aaa"/><rect x="0" y="12" width="1" height="1" fill="#aaa"/></svg>
<div class="a" style="left:539px;top:690px;width:1px;height:17px;background:#d0d0d0;"></div>
<svg class="a" style="left:545px;top:695px;" width="7" height="10" viewBox="0 0 7 10"><path d="M5.8 1 L1.8 5 L5.8 9" fill="none" stroke="#333" stroke-width="1.8"/></svg>
<div class="a" style="left:557px;top:691px;width:437px;height:15px;background:#cbcbcb;"></div>
<svg class="a" style="left:999px;top:695px;" width="7" height="10" viewBox="0 0 7 10"><path d="M1.2 1 L5.2 5 L1.2 9" fill="none" stroke="#333" stroke-width="1.8"/></svg>
<div class="a" style="left:1010px;top:690px;width:18px;height:17px;background:#fff;"></div>
<svg class="a" style="left:1013px;top:693px;" width="13" height="12" viewBox="0 0 13 12"><circle cx="5" cy="5" r="4.3" fill="none" stroke="#333" stroke-width="1.1"/><path d="M8 8 L12 11.5" stroke="#333" stroke-width="1.8"/><path d="M3 3.5 H7 M3 5 H7 M3 6.5 H7" stroke="#666" stroke-width="0.6" stroke-dasharray="0.8 0.8"/></svg>
<div class="a" style="left:32px;top:707px;width:996px;height:21px;background:#f2f2f2;"></div>
<div class="a" style="left:32px;top:707px;width:996px;height:1px;background:#dcdcdc;"></div>
<div class="a" style="left:0px;top:728px;width:1366px;height:1px;background:#d6d6d6;"></div>
<svg class="a" style="left:34px;top:709px;" width="6" height="17" viewBox="0 0 6 17"><rect x="0.5" y="0" width="1" height="1" fill="#aaa"/><rect x="2.5" y="2" width="1" height="1" fill="#aaa"/><rect x="0.5" y="4" width="1" height="1" fill="#aaa"/><rect x="2.5" y="6" width="1" height="1" fill="#aaa"/><rect x="0.5" y="8" width="1" height="1" fill="#aaa"/><rect x="2.5" y="10" width="1" height="1" fill="#aaa"/><rect x="0.5" y="12" width="1" height="1" fill="#aaa"/><rect x="2.5" y="14" width="1" height="1" fill="#aaa"/><rect x="0.5" y="16" width="1" height="1" fill="#aaa"/></svg>
<svg class="a" style="left:47px;top:713px;" width="5" height="8" viewBox="0 0 5 8"><path d="M0 0 L4.5 4 L0 8 Z" fill="#555"/></svg>
<svg class="a" style="left:62px;top:710px;" width="14" height="15" viewBox="0 0 14 15"><path d="M9 1.5 Q10.5 0 12 1.5 Q13.5 3 12 4.5 L10.5 6 L7.5 3 Z" fill="#222"/><path d="M8.5 4 L2 10.5 Q1 12 1.5 13.5 Q3 14 4 13 L10.5 6.5" fill="#fff" stroke="#222" stroke-width="1"/><path d="M1.5 13.5 L6 9" stroke="#c8652a" stroke-width="1.4"/></svg>
<svg class="a" style="left:84px;top:712px;" width="7" height="10" viewBox="0 0 7 10"><path d="M6 1 L1.5 5 L6 9" fill="none" stroke="#c8c8c8" stroke-width="1.5"/></svg>
<svg class="a" style="left:97.0px;top:709px" width="17" height="18"><rect x="0.5" y="0.5" width="16" height="17" fill="#fff" stroke="#555"/><path d="M3 15 L14 3" stroke="#d0343a" stroke-width="1"/></svg>
<div class="a" style="left:113.9px;top:709px;width:17.6px;height:18px;background:#ffffff;border:1px solid #555;border-right:none"></div>
<div class="a" style="left:130.8px;top:709px;width:17.6px;height:18px;background:#f2f2f2;border:1px solid #555;border-right:none"></div>
<div class="a" style="left:147.7px;top:709px;width:17.6px;height:18px;background:#b3b3b3;border:1px solid #555;border-right:none"></div>
<div class="a" style="left:164.6px;top:709px;width:17.6px;height:18px;background:#808080;border:1px solid #555;border-right:none"></div>
<div class="a" style="left:181.5px;top:709px;width:17.6px;height:18px;background:#4d4d4d;border:1px solid #555;border-right:none"></div>
<div class="a" style="left:198.4px;top:709px;width:17.6px;height:18px;background:#363636;border:1px solid #555;border-right:none"></div>
<div class="a" style="left:215.3px;top:709px;width:17.6px;height:18px;background:#333333;border:1px solid #555;border-right:none"></div>
<div class="a" style="left:232.2px;top:709px;width:17.6px;height:18px;background:#2b2b2b;border:1px solid #555;border-right:none"></div>
<div class="a" style="left:249.1px;top:709px;width:17.6px;height:18px;background:#1c1c1c;border:1px solid #555;border-right:none"></div>
<div class="a" style="left:266.0px;top:709px;width:17.6px;height:18px;background:#1793d8;border:1px solid #555;border-right:none"></div>
<div class="a" style="left:282.9px;top:709px;width:17.6px;height:18px;background:#1793d8;border:1px solid #555;border-right:none"></div>
<div class="a" style="left:299.8px;top:709px;width:17.6px;height:18px;background:#1a8ee0;border:1px solid #555;border-right:none"></div>
<div class="a" style="left:316.7px;top:709px;width:17.6px;height:18px;background:#3a3a3a;border:1px solid #555;border-right:none"></div>
<svg class="a" style="left:990px;top:712px;" width="8" height="12" viewBox="0 0 8 12"><path d="M1.5 1 L6 6 L1.5 11" fill="none" stroke="#cfcfcf" stroke-width="1.6"/></svg>
<svg class="a" style="left:1009px;top:713px;" width="8" height="8" viewBox="0 0 8 8"><path d="M0.5 0.5 L3.5 4 L0.5 7.5 M4 0.5 L7 4 L4 7.5" fill="none" stroke="#c4c4c4" stroke-width="1.1"/></svg>
<div class="a" style="left:1033px;top:118px;width:313px;height:22px;background:#e6e6e6;"></div>
<div class="a" style="left:1033px;top:140px;width:313px;height:1px;background:#c9c9c9;"></div>
<div class="t" style="left:1039.5px;top:122.84px;font-size:12px;color:#222;font-weight:normal;letter-spacing:-0.2px;">Советы</div>
<svg class="a" style="left:1310px;top:126px;" width="10" height="7" viewBox="0 0 10 7"><path d="M0 0 L4.5 3.5 L0 7 Z M5 0 L9.5 3.5 L5 7 Z" fill="#b4b4b4"/></svg>
<svg class="a" style="left:1329px;top:125px;" width="9" height="9" viewBox="0 0 9 9"><path d="M0.8 0.8 L8.2 8.2 M8.2 0.8 L0.8 8.2" stroke="#b4b4b4" stroke-width="1.4"/></svg>
<div class="a" style="left:1033px;top:141px;width:291px;height:558px;background:#ffffff;"></div>
<div class="a" style="left:1324px;top:141px;width:1px;height:558px;background:#e0e0e0;"></div>
<div class="t" style="left:1039.2px;top:158.15px;font-size:14px;color:#111;font-weight:bold;letter-spacing:0.15px;">Выделение объектов</div>
<svg class="a" style="left:1045.5px;top:183px;" width="12" height="20" viewBox="0 0 12 20"><path d="M0.5 0 L0.8 14.2 L3.8 11.6 L6.6 18.6 L9 17.6 L6.2 10.8 L10.2 10.6 Z" fill="#111"/></svg>
<div class="t" style="left:1063.5px;top:186.69px;font-size:11px;color:#111;font-weight:bold;letter-spacing:-0.05px;">Указатель</div>
<div class="a" style="left:1041px;top:216.7px;width:3px;height:3px;background:#222;border-radius:1.5px"></div>
<div class="t" style="left:1047.8px;top:211.89px;font-size:11px;color:#222;font-weight:normal;letter-spacing:0.1px;">Чтобы выбрать объект, щелкните его. Удерживайте</div>
<div class="t" style="left:1047.8px;top:228.89px;font-size:11px;color:#222;font-weight:normal;letter-spacing:0.1px;">нажатой клавишу <b>Alt</b>, чтобы выбрать объект,</div>
<div class="t" style="left:1047.8px;top:246.09px;font-size:11px;color:#222;font-weight:normal;letter-spacing:0.1px;">который находится за другим объектом, или</div>
<div class="t" style="left:1047.8px;top:262.89px;font-size:11px;color:#222;font-weight:normal;letter-spacing:0.1px;">клавишу <b>Ctrl</b>, чтобы выбрать объект в группе.</div>
<div class="a" style="left:1041px;top:289.3px;width:3px;height:3px;background:#222;border-radius:1.5px"></div>
<div class="t" style="left:1047.8px;top:284.49px;font-size:11px;color:#222;font-weight:normal;letter-spacing:0.1px;">Чтобы выбрать несколько объектов, щелкните</div>
<div class="t" style="left:1047.8px;top:301.49px;font-size:11px;color:#222;font-weight:normal;letter-spacing:0.1px;">каждый объект, удерживая нажатой клавишу <b>Shift</b>,</div>
<div class="t" style="left:1047.8px;top:318.49px;font-size:11px;color:#222;font-weight:normal;letter-spacing:0.1px;">или перетащите указатель для образования</div>
<div class="t" style="left:1047.8px;top:335.49px;font-size:11px;color:#222;font-weight:normal;letter-spacing:0.1px;">выделяющей рамки вокруг объектов.</div>
<div class="a" style="left:1041px;top:362.1px;width:3px;height:3px;background:#222;border-radius:1.5px"></div>
<div class="t" style="left:1047.8px;top:357.29px;font-size:11px;color:#222;font-weight:normal;letter-spacing:0.1px;">Чтобы выбрать все объекты, дважды щелкните</div>
<div class="t" style="left:1047.8px;top:374.29px;font-size:11px;color:#222;font-weight:normal;letter-spacing:0.1px;"><b>указатель</b>.</div>
<div class="a" style="left:1040px;top:403px;width:277px;height:1px;background:#c8c8c8;"></div>
<div class="t" style="left:1039px;top:422.15px;font-size:14px;color:#111;font-weight:bold;letter-spacing:0.15px;">Подробнее</div>
<svg class="a" style="left:1046px;top:448px;" width="18" height="18" viewBox="0 0 18 18"><circle cx="9" cy="9" r="8.2" fill="#fff" stroke="#111" stroke-width="1.5"/><rect x="8" y="7.3" width="2" height="6.2" fill="#111"/><circle cx="9" cy="5" r="1.15" fill="#111"/></svg>
<div class="t" style="left:1074.6px;top:452.77px;font-size:11.5px;color:#111;font-weight:bold;letter-spacing:0.08px;">Раздел справки</div>
<div class="t" style="left:1074.6px;top:470.69px;font-size:11px;color:#4a8ec8;font-weight:normal;letter-spacing:0.04px;">Выделение объектов</div>
<div class="a" style="left:1033px;top:699px;width:291px;height:29px;background:#f2f2f2;"></div>
<svg class="a" style="left:1038px;top:706px;" width="17" height="18" viewBox="0 0 17 18"><path d="M0.7 8.9 L8 1.3 L15.6 8.9 M2.3 8.9 V16.4 H13.9 V8.9 M3.4 6 V1.3 H6.2" fill="none" stroke="#222" stroke-width="1.2"/></svg>
<svg class="a" style="left:1274px;top:708px;" width="18" height="15" viewBox="0 0 18 15"><path d="M0.8 7.5 L7.5 0.8 V4.5 H16.7 V10.5 H7.5 V14.2 Z" fill="#fff" stroke="#222" stroke-width="1.3" stroke-linejoin="miter"/></svg>
<svg class="a" style="left:1302px;top:708px;" width="18" height="15" viewBox="0 0 18 15"><path d="M17.2 7.5 L10.5 0.8 V4.5 H1.3 V10.5 H10.5 V14.2 Z" fill="#fff" stroke="#cfcfcf" stroke-width="1.3"/></svg>
<div class="a" style="left:1325px;top:141px;width:21px;height:587px;background:#f0f0f0;"></div>
<div class="a" style="left:1325px;top:141px;width:20px;height:88px;background:#bdbdbd;"></div>
<div class="a" style="left:1325px;top:229px;width:20px;height:200px;background:#dcdcdc;"></div>
<svg class="a" style="left:1327px;top:144px;" width="17" height="16" viewBox="0 0 17 16"><path d="M0.5 0 L0.5 12 L3 9.8 L5.3 14.8 L7.3 13.9 L5.1 9 L8.5 9 Z" fill="#222"/><text x="9" y="8" font-size="10" font-family="Liberation Sans" fill="#333">?</text></svg>
<div class="t" style="left:1329px;top:166px;font-size:11.5px;color:#222;transform-origin:0 0;transform:translate(10px,0) rotate(90deg)">Советы</div>
<svg class="a" style="left:1327px;top:232px;" width="17" height="17" viewBox="0 0 17 17"><path d="M1 5.5 L5.5 1 L10 5.5 L5.5 10 Z" fill="#fff" stroke="#222" stroke-width="1.3"/><path d="M3 6 H8 L5.5 8.5 Z" fill="#c8652a"/><path d="M9 11 H16 M9 13.5 H16 M12 8 V10" stroke="#222" stroke-width="1.2"/></svg>
<div class="t" style="left:1329px;top:256px;font-size:11.5px;color:#222;transform-origin:0 0;transform:translate(10px,0) rotate(90deg)">Свойства</div>
<svg class="a" style="left:1327px;top:333px;" width="15" height="15" viewBox="0 0 15 15"><path d="M7.5 0.7 L14.3 4.5 L7.5 8.3 L0.7 4.5 Z" fill="#fff" stroke="#222" stroke-width="1.2"/><path d="M0.7 7.5 L7.5 11.3 L14.3 7.5" fill="none" stroke="#222" stroke-width="1.2"/><path d="M2 10.5 L7.5 13.8 L13 10.5 Z" fill="#222"/></svg>
<div class="t" style="left:1329px;top:355px;font-size:11.5px;color:#222;transform-origin:0 0;transform:translate(10px,0) rotate(90deg)">Объекты</div>
<svg class="a" style="left:1330px;top:436px;" width="11" height="11" viewBox="0 0 11 11"><path d="M5.5 0 V11 M0 5.5 H11" stroke="#bbb" stroke-width="1.6"/></svg>
<div class="a" style="left:1346px;top:118px;width:20px;height:611px;background:#f0f0f0;"></div>
<svg class="a" style="left:1349px;top:120px;" width="15" height="4" viewBox="0 0 15 4"><rect x="0" y="0" width="1" height="1" fill="#aaa"/><rect x="2" y="2" width="1" height="1" fill="#aaa"/><rect x="4" y="0" width="1" height="1" fill="#aaa"/><rect x="6" y="2" width="1" height="1" fill="#aaa"/><rect x="8" y="0" width="1" height="1" fill="#aaa"/><rect x="10" y="2" width="1" height="1" fill="#aaa"/><rect x="12" y="0" width="1" height="1" fill="#aaa"/><rect x="14" y="2" width="1" height="1" fill="#aaa"/></svg>
<svg class="a" style="left:1354px;top:131px;" width="5" height="8" viewBox="0 0 5 8"><path d="M0 0 L4.5 4 L0 8 Z" fill="#555"/></svg>
<svg class="a" style="left:1350px;top:150px;" width="12" height="12" viewBox="0 0 12 12"><path d="M1 11 L8 4 M7 2 L10 5" stroke="#c8c8c8" stroke-width="1.8"/></svg>
<svg class="a" style="left:1351px;top:170px;" width="9" height="6" viewBox="0 0 9 6"><path d="M0.8 5 L4.5 1 L8.2 5" fill="none" stroke="#c8c8c8" stroke-width="1.5"/></svg>
<svg class="a" style="left:1347px;top:182.8px" width="18" height="17"><rect x="0.5" y="0.5" width="17" height="16" fill="#fff" stroke="#555"/><path d="M3 14 L15 3" stroke="#d0343a" stroke-width="1"/></svg>
<div class="a" style="left:1347px;top:199.7px;width:18px;height:17.6px;background:#000000;border:1px solid #555;border-bottom:none"></div>
<div class="a" style="left:1347px;top:216.6px;width:18px;height:17.6px;background:#1a1a1a;border:1px solid #555;border-bottom:none"></div>
<div class="a" style="left:1347px;top:233.5px;width:18px;height:17.6px;background:#333333;border:1px solid #555;border-bottom:none"></div>
<div class="a" style="left:1347px;top:250.4px;width:18px;height:17.6px;background:#4d4d4d;border:1px solid #555;border-bottom:none"></div>
<div class="a" style="left:1347px;top:267.3px;width:18px;height:17.6px;background:#666666;border:1px solid #555;border-bottom:none"></div>
<div class="a" style="left:1347px;top:284.2px;width:18px;height:17.6px;background:#808080;border:1px solid #555;border-bottom:none"></div>
<div class="a" style="left:1347px;top:301.1px;width:18px;height:17.6px;background:#999999;border:1px solid #555;border-bottom:none"></div>
<div class="a" style="left:1347px;top:318.0px;width:18px;height:17.6px;background:#b3b3b3;border:1px solid #555;border-bottom:none"></div>
<div class="a" style="left:1347px;top:334.9px;width:18px;height:17.6px;background:#cccccc;border:1px solid #555;border-bottom:none"></div>
<div class="a" style="left:1347px;top:351.8px;width:18px;height:17.6px;background:#e6e6e6;border:1px solid #555;border-bottom:none"></div>
<div class="a" style="left:1347px;top:368.7px;width:18px;height:17.6px;background:#ffffff;border:1px solid #555;border-bottom:none"></div>
<div class="a" style="left:1347px;top:385.6px;width:18px;height:17.6px;background:#0000ff;border:1px solid #555;border-bottom:none"></div>
<div class="a" style="left:1347px;top:402.5px;width:18px;height:17.6px;background:#00ffff;border:1px solid #555;border-bottom:none"></div>
<div class="a" style="left:1347px;top:419.4px;width:18px;height:17.6px;background:#00ff00;border:1px solid #555;border-bottom:none"></div>
<div class="a" style="left:1347px;top:436.3px;width:18px;height:17.6px;background:#ffff00;border:1px solid #555;border-bottom:none"></div>
<div class="a" style="left:1347px;top:453.2px;width:18px;height:17.6px;background:#ff0000;border:1px solid #555;border-bottom:none"></div>
<div class="a" style="left:1347px;top:470.1px;width:18px;height:17.6px;background:#ff00ff;border:1px solid #555;border-bottom:none"></div>
<div class="a" style="left:1347px;top:487.0px;width:18px;height:17.6px;background:#9900cc;border:1px solid #555;border-bottom:none"></div>
<div class="a" style="left:1347px;top:503.9px;width:18px;height:17.6px;background:#ff6600;border:1px solid #555;border-bottom:none"></div>
<div class="a" style="left:1347px;top:520.8px;width:18px;height:17.6px;background:#ff99cc;border:1px solid #555;border-bottom:none"></div>
<div class="a" style="left:1347px;top:537.7px;width:18px;height:17.6px;background:#663333;border:1px solid #555;border-bottom:none"></div>
<div class="a" style="left:1347px;top:554.6px;width:18px;height:17.6px;background:#ccccff;border:1px solid #555;border-bottom:none"></div>
<div class="a" style="left:1347px;top:571.5px;width:18px;height:17.6px;background:#9999ff;border:1px solid #555;border-bottom:none"></div>
<div class="a" style="left:1347px;top:588.4px;width:18px;height:17.6px;background:#6699ff;border:1px solid #555;border-bottom:none"></div>
<div class="a" style="left:1347px;top:605.3px;width:18px;height:17.6px;background:#6666ff;border:1px solid #555;border-bottom:none"></div>
<div class="a" style="left:1347px;top:622.2px;width:18px;height:17.6px;background:#6666cc;border:1px solid #555;border-bottom:none"></div>
<div class="a" style="left:1347px;top:639.1px;width:18px;height:17.6px;background:#003399;border:1px solid #555;border-bottom:none"></div>
<div class="a" style="left:1347px;top:656.0px;width:18px;height:17.6px;background:#000066;border:1px solid #555;border-bottom:none"></div>
<div class="a" style="left:1347px;top:672.9px;width:18px;height:13.7px;background:#336699;border:1px solid #555;border-bottom:none"></div>
<svg class="a" style="left:1351px;top:691px;" width="9" height="6" viewBox="0 0 9 6"><path d="M0.8 1 L4.5 5 L8.2 1" fill="none" stroke="#c8c8c8" stroke-width="1.5"/></svg>
<svg class="a" style="left:1352px;top:710px;" width="8" height="8" viewBox="0 0 8 8"><path d="M0.5 0.5 L3.5 4 L0.5 7.5 M4 0.5 L7 4 L4 7.5" fill="none" stroke="#c4c4c4" stroke-width="1.1"/></svg>
<div class="a" style="left:0px;top:729px;width:1366px;height:37px;background:#f2f2f2;"></div>
<svg class="a" style="left:11px;top:739px;" width="18" height="17" viewBox="0 0 18 17"><path d="M15.85 6.44 L16.00 8.00 L14.08 9.21 L13.73 10.37 L14.65 12.44 L13.66 13.66 L11.44 13.16 L10.37 13.73 L9.56 15.85 L8.00 16.00 L6.79 14.08 L5.63 13.73 L3.56 14.65 L2.34 13.66 L2.84 11.44 L2.27 10.37 L0.15 9.56 L0.00 8.00 L1.92 6.79 L2.27 5.63 L1.35 3.56 L2.34 2.34 L4.56 2.84 L5.63 2.27 L6.44 0.15 L8.00 0.00 L9.21 1.92 L10.37 2.27 L12.44 1.35 L13.66 2.34 L13.16 4.56 L13.73 5.63 Z" fill="#2a2a2a" stroke="#2a2a2a" stroke-width="0.6" stroke-linejoin="round"/><circle cx="8" cy="8" r="3.3" fill="#f2f2f2"/><path d="M14 16 H18 V12 Z" fill="#777"/></svg>
<div class="t" style="left:36.2px;top:742.34px;font-size:12px;color:#111;font-weight:normal;letter-spacing:0.11px;">Следующий щелчок - перетаскивание/масштабирование; второй щелчок - поворот/наклон; инструмент с двойным щелчком выбирает все объекты; Shift+щелчок - выбор нескольких элементов; Alt+щелчок - цифры</div>
<svg class="a" style="left:1304px;top:741px;" width="17" height="15" viewBox="0 0 17 15"><path d="M7 1 L14 8 L7 15 L0 8 Z" fill="#fff" stroke="#222" stroke-width="1.5"/><path d="M2.5 8.5 H11.5 L7 13 Z" fill="#d62027"/><path d="M12 12 L16 14 V15 H12 Z" fill="#d62027"/></svg>
<svg class="a" style="left:1321px;top:736px;" width="23" height="22" viewBox="0 0 23 22"><rect x="0.5" y="0.5" width="22" height="21" fill="#fff" stroke="#aaa"/><path d="M2 20 L21 2" stroke="#c0313a" stroke-width="1.4"/></svg>
<div class="t" style="left:1348px;top:742.34px;font-size:12px;color:#111;font-weight:normal;letter-spacing:0px;">Не</div>
</body></html>
